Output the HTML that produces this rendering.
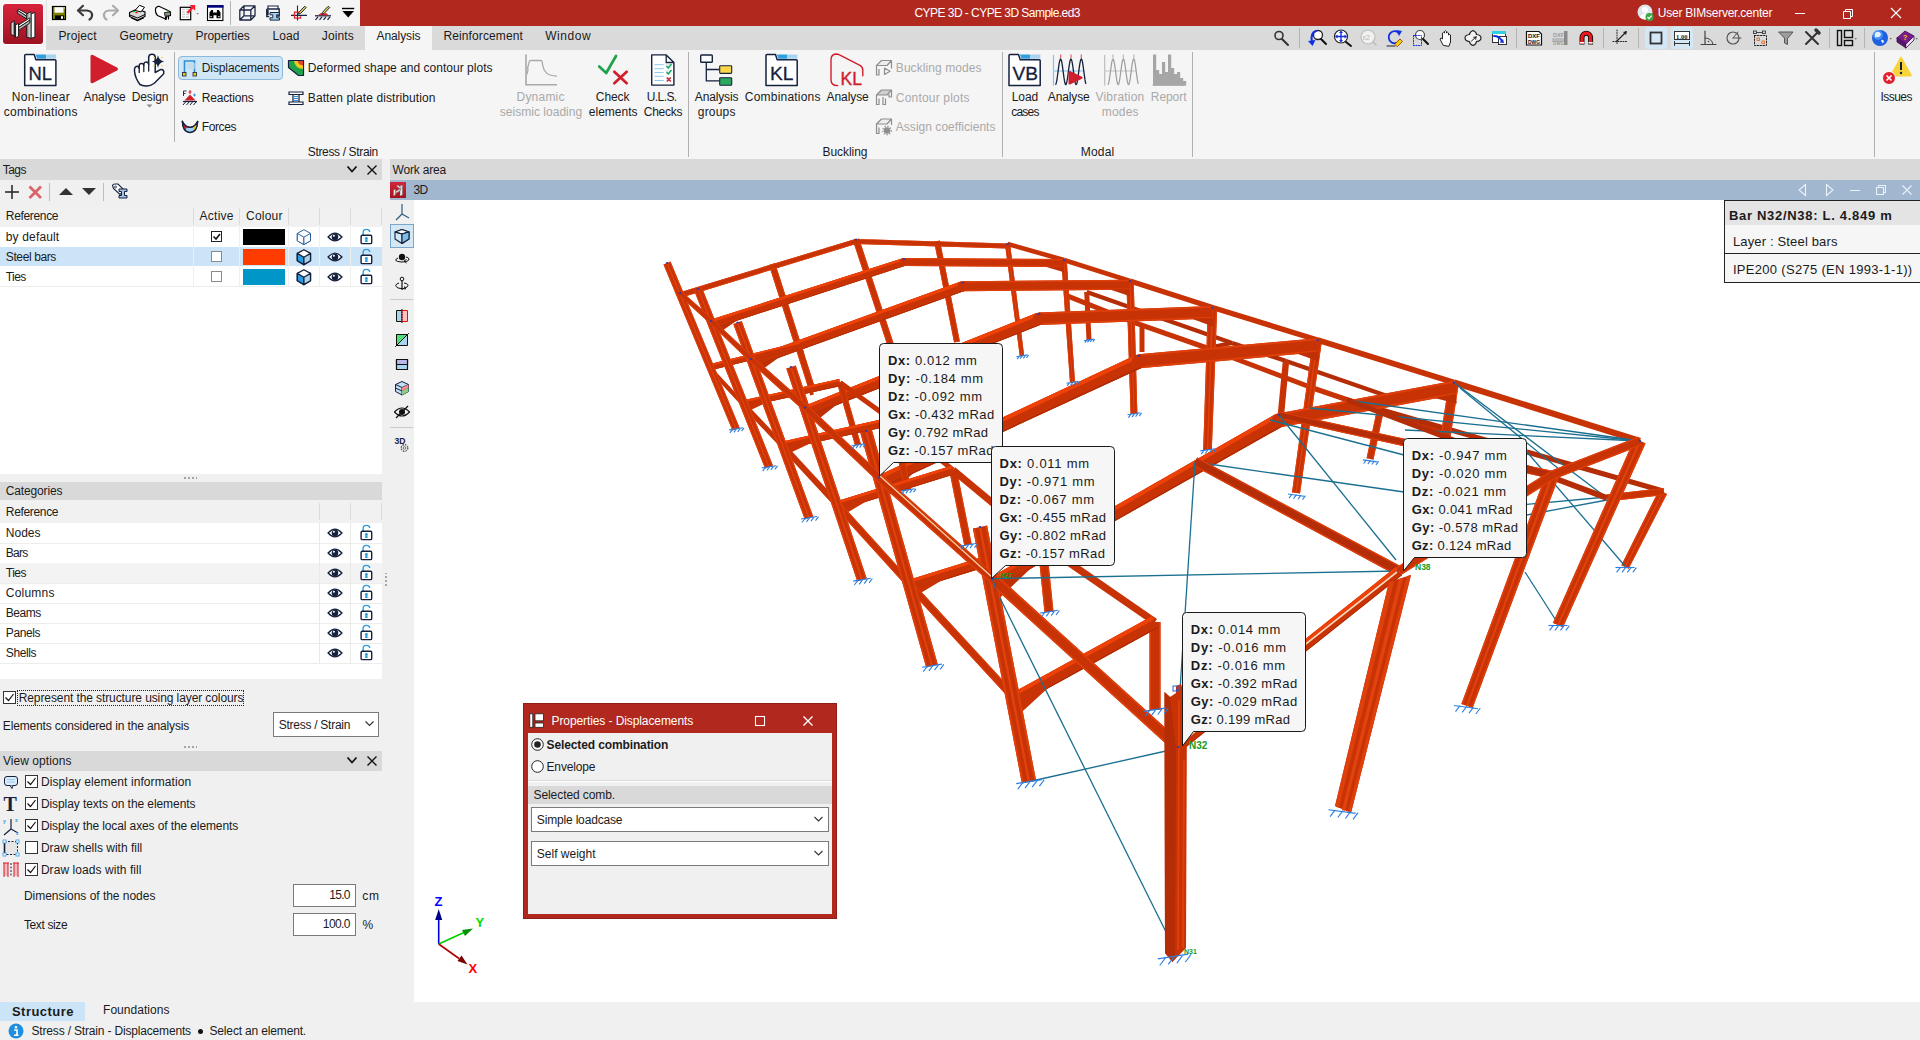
<!DOCTYPE html>
<html><head><meta charset="utf-8"><title>CYPE 3D</title>
<style>
*{box-sizing:border-box;margin:0;padding:0}
html,body{width:1920px;height:1040px;overflow:hidden;background:#f0f0f0;font-family:"Liberation Sans",sans-serif;font-size:12px;color:#1b1b1b}
.a{position:absolute}
.t{position:absolute;white-space:nowrap;font-size:12px;line-height:14px;color:#1b1b1b}
.c{text-align:center}
.g{color:#a9a9a9}
.b{font-weight:bold}
.w{color:#fff}
svg{position:absolute;overflow:visible}
.hdr{position:absolute;background:#d9d9d9;height:21px}
.row{position:absolute;left:0;width:382px;height:20px;background:#fff;border-bottom:1px solid #ececec}
.vs{position:absolute;width:1px;background:#b0b0b0}
.cb{position:absolute;width:11px;height:11px;border:1px solid #333;background:#fff}
.sel{position:absolute;background:#fff;border:1px solid #7a7a7a}
.tip{position:absolute;background:#f6f6f6;border:1px solid #222;border-radius:4px}
.tip div{position:absolute;left:8px;white-space:nowrap;font-size:13px;line-height:15px;color:#1b1b1b}
</style></head><body>
<!-- TITLE BAR -->
<div class="a" style="left:0;top:0;width:1920px;height:26px;background:#b0281e"></div>
<div class="a" style="left:0;top:0;width:360px;height:26px;background:#f5f5f5"></div>
<div class="a" style="left:0;top:26px;width:1920px;height:24px;background:#dadada"></div>
<div class="a" style="left:0;top:26px;width:46px;height:24px;background:#f5f5f5"></div>
<div class="a" style="left:0;top:50px;width:1920px;height:109px;background:#f5f5f5"></div>
<div class="a" style="left:365px;top:26px;width:67px;height:25px;background:#f5f5f5"></div>
<!-- app icon -->
<div class="a" style="left:2px;top:3px;width:42px;height:42px;border-radius:4px;background:#fbfbfb"></div>
<div class="a" style="left:3px;top:4px;width:40px;height:40px;border-radius:3px;background:linear-gradient(#d6223b,#c01c30 45%,#9b1220)"></div>
<svg style="left:3px;top:4px" width="40" height="40" viewBox="0 0 40 40">
 <defs><linearGradient id="ag" x1="0" x2="1"><stop offset="0" stop-color="#8f8f8f"/><stop offset="1" stop-color="#f2f2f2"/></linearGradient></defs>
 <g stroke="#141414" stroke-width="0.9" stroke-linejoin="round">
 <path d="M14.300 6.300 L15.800 5.200 L25.200 10.600 L23.900 12.300 Z" fill="#fff"/>
 <path d="M14.300 6.300 L23.900 12.300 L23.900 15 L14.300 9.200 Z" fill="#b4b4b4"/>
 <path d="M23.700 10 L27.400 7.800 L28.200 10 L28.200 34.300 L23.700 33.300 Z" fill="url(#ag)"/>
 <path d="M28.200 10 L31.900 8.300 L31.900 33 L28.200 34.300 Z" fill="#fff"/>
 <path d="M15.700 21 L26.800 13.800 L26.800 16.200 L15.700 23.600 Z" fill="#fff"/>
 <path d="M15.700 23.600 L26.800 16.200 L26.800 19 L15.700 26.400 Z" fill="#b9b9b9"/>
 <path d="M8 19 L11.300 16.800 L11.300 32 L8 30.300 Z" fill="#d4d4d4"/>
 <path d="M11.300 18.800 L12.600 20.500 L12.600 33.600 L11.300 32 Z" fill="#5a5a5a"/>
 <path d="M12.600 21 L15.500 19.300 L15.500 32.200 L12.600 33.800 Z" fill="#fff"/>
 </g>
</svg>
<!-- QAT icons -->
<div class="a" style="left:46px;top:0;width:1px;height:26px;background:#e2e2e2"></div>
<svg style="left:46px;top:0" width="320" height="26" viewBox="46 0 320 26">
 <!-- save -->
 <rect x="52.500" y="6.500" width="13" height="13" fill="#808000" stroke="#000" stroke-width="1.200"/><rect x="54.500" y="7.200" width="9" height="5.500" fill="#fff"/><rect x="55" y="15.400" width="9" height="4" fill="#000"/><rect x="61" y="16.200" width="2" height="2.600" fill="#fff"/><rect x="64" y="7.500" width="1" height="1" fill="#fff"/>
 <!-- undo -->
 <path d="M78.500 10.500 H87 Q92.500 11 92 16 Q91.500 18.500 89.500 19.500" fill="none" stroke="#3a3a3a" stroke-width="2.200" stroke-linecap="round"/><path d="M83 5.800 L78 10.500 L83 15.200" fill="none" stroke="#3a3a3a" stroke-width="2.200" stroke-linecap="round" stroke-linejoin="round"/>
 <!-- redo -->
 <path d="M117.500 10.500 H109 Q103.500 11 104 16 Q104.500 18.500 106.500 19.500" fill="none" stroke="#ababab" stroke-width="2.200" stroke-linecap="round"/><path d="M113 5.800 L118 10.500 L113 15.200" fill="none" stroke="#ababab" stroke-width="2.200" stroke-linecap="round" stroke-linejoin="round"/>
 <!-- printer -->
 <path d="M129.500 12.500 L137 9 L145 12 L145 16.500 L137.500 20.300 L129.500 16.500 Z" fill="#d9d9d9" stroke="#000" stroke-width="1.100"/><path d="M135 10.500 L139.500 5.300 L144.500 7.300 L141 11.800 Z" fill="#fff" stroke="#000" stroke-width="1"/><path d="M129.500 14.800 L137.500 18 L145 14.500" fill="none" stroke="#000" stroke-width="1"/><rect x="133" y="11" width="2" height="1.200" fill="#0c0"/><rect x="135.500" y="12" width="2" height="1.200" fill="#e00"/><path d="M131 17.800 L137.500 20.800 L144 17.800" fill="none" stroke="#000" stroke-width="1"/>
 <!-- plotter -->
 <path d="M155.500 9 Q156 6.500 159 6.300 L168 10.500 L170.500 12 L170.500 15.500 L167 16 L166 19.500 L163.500 18 L157.500 15.500 Q155 13 155.500 9Z" fill="#fff" stroke="#000" stroke-width="1.100"/><path d="M164.500 12.500 L170.500 12 L170.500 15.500 L165 16.300Z" fill="#8e8e8e" stroke="#000" stroke-width=".8"/><rect x="167" y="10.600" width="1.800" height="1" fill="#0c0"/><path d="M165.500 16.500 v3 M168.500 16 v3.500" stroke="#000" stroke-width="1.100"/>
 <!-- export -->
 <rect x="180.300" y="7.300" width="10.400" height="12.400" fill="#fff" stroke="#000" stroke-width="1.200"/><path d="M182 9.500h7M182 12h7M182 14.500h7M182 17h7" stroke="#d0d0d0" stroke-width="1.600"/><path d="M185.500 9 v9" stroke="#fff" stroke-width="1"/><path d="M187.500 13 L193 7" stroke="#ff1a2e" stroke-width="2.400"/><path d="M189.500 5 L195.200 5 L195.200 10.800 Z" fill="#ff1a2e"/>
 <path d="M196.200 13 h2.800 l-1.400 1.800z" fill="#8a8a8a"/>
 <!-- binoculars -->
 <rect x="207.500" y="5.700" width="15.400" height="14.800" fill="#fff" stroke="#000" stroke-width="1.100"/><rect x="207" y="5.200" width="16.400" height="2.500" fill="#000080"/><path d="M209.500 18.300 v-5.800 l1.800 -2.600 h1.800 v2.600 h3.800 v-2.600 h1.800 l1.800 2.600 v5.800 h-4 v-3 h-3 v3z" fill="#000"/><rect x="210.500" y="16" width="1.200" height="1.200" fill="#fff"/><rect x="218.300" y="16" width="1.200" height="1.200" fill="#fff"/>
 <!-- sep -->
 <rect x="230" y="1" width="1" height="24" fill="#b4b4b4"/>
 <!-- 3d box -->
 <path d="M239.800 10 h11 v10 h-11z M244 5.800 h11 v10 h-11z M239.800 10 l4.200 -4.200 M250.800 10 l4.200 -4.200 M239.800 20 l4.200 -4.200 M250.800 20 l4.200 -4.200" fill="none" stroke="#1b2742" stroke-width="1.300" stroke-linejoin="round"/>
 <!-- section print -->
 <path d="M268 9 v-3 h10 v3" fill="#fff" stroke="#1b2742" stroke-width="1.200"/><path d="M266.800 9 h12.400 v7 h-3 M266.800 9 v7.500 h2.500" fill="none" stroke="#1b2742" stroke-width="1.400"/><rect x="266.500" y="10" width="2.200" height="5" fill="#1b2742"/><path d="M270 12.500 h9.500 v2.300 h-2.800 v3 h2.800 v2.300 h-9.500 v-2.300 h2.800 v-3 h-2.800z" fill="#a6d3ee" stroke="#1b2742" stroke-width="1"/>
 <!-- node edit -->
 <path d="M291 15.400 h16 M297.500 5.500 v15" stroke="#1b2742" stroke-width="1.100"/><path d="M300.500 12.200 h-6 v6 h6 v-2" fill="none" stroke="#e0212f" stroke-width="1.300"/><path d="M299 12.300 l5.200 -5.600 q1.400 -.6 2 .8 l-5.400 5.800 l-2.300 .9z" fill="#f2d33a" stroke="#1b2742" stroke-width="1"/>
 <!-- ground edit -->
 <path d="M315 15.800 h16" stroke="#1b2742" stroke-width="1.300"/><path d="M315.500 19.800 l2.500 -3 M319.500 19.800 l2.500 -3 M323.500 19.800 l2.500 -3 M327.500 19.800 l2.500 -3" stroke="#1b2742" stroke-width="1.300"/><path d="M318 15.200 l2.500 -2 h6 l2 2z" fill="#e0212f"/><path d="M322.500 12.300 l5.200 -5.600 q1.400 -.6 2 .8 l-5.400 5.800 l-2.300 .9z" fill="#f2d33a" stroke="#1b2742" stroke-width="1"/>
 <path d="M342.400 11 h11.600 l-5.800 6.500z" fill="#000"/><rect x="342" y="7.800" width="12.200" height="1.400" fill="#000"/>
</svg>
<!-- title text -->
<svg style="left:1637px;top:4px" width="18" height="18" viewBox="0 0 18 18"><circle cx="8" cy="8" r="7.5" fill="#dfe6ee"/><circle cx="8" cy="6" r="3" fill="#fff"/><path d="M2.5 13 q5.5 -7 11 0 q-5.5 5 -11 0z" fill="#fff"/><circle cx="12.5" cy="13" r="4" fill="#3aa845"/><path d="M10.5 13 l1.5 1.6 l2.6 -3" stroke="#fff" stroke-width="1.2" fill="none"/></svg>
<svg style="left:1790px;top:0" width="130" height="26" viewBox="1790 0 130 26"><path d="M1795 13.5 h10" stroke="#fff" stroke-width="1"/><path d="M1843.5 11.500 h7 v7 h-7z M1845.500 11.500 v-2 h7 v7 h-2" fill="none" stroke="#fff" stroke-width="1"/><path d="M1891 8 l10 10 M1901 8 l-10 10" stroke="#fff" stroke-width="1.3"/></svg>
<!-- MENU TABS -->
<!-- right toolbar in menu row -->
<svg style="left:1260px;top:26px" width="660" height="24" viewBox="1260 26 660 24">
 <g fill="none" stroke-linecap="round">
 <!-- magnifier -->
 <circle cx="1279" cy="35.500" r="4" stroke="#333" stroke-width="1.6"/><path d="M1282 39 l6 6" stroke="#333" stroke-width="2"/>
 <rect x="1299" y="28" width="1" height="20" fill="#b5b5b5" stroke="none"/>
 <!-- zoom prev -->
 <circle cx="1318" cy="35" r="4.500" stroke="#222" stroke-width="1.3" fill="#fff"/><path d="M1321 39 l5 5" stroke="#111" stroke-width="2"/><path d="M1316 31 q-6 2 -4 11" stroke="#1030e0" stroke-width="2"/><path d="M1308 41 l4.500 5 l3 -6z" fill="#1030e0" stroke="none"/>
 <!-- zoom all -->
 <circle cx="1341" cy="36.500" r="6.500" stroke="#222" stroke-width="1.2" fill="#fff"/><path d="M1346 42 l5 4" stroke="#111" stroke-width="2"/><path d="M1341 32 v9 M1336.500 36.500 h9" stroke="#1030e0" stroke-width="1.4"/><path d="M1341 30.500 l-2 2.500 h4z M1341 42.500 l-2 -2.500 h4z M1335 36.500 l2.500 -2 v4z M1347 36.500 l-2.500 -2 v4z" fill="#1030e0" stroke="none"/>
 <!-- x2 -->
 <circle cx="1368" cy="37" r="7" stroke="#bdbdbd" stroke-width="1.2" fill="#f1f1f1"/><path d="M1373 42 l3 3" stroke="#bdbdbd" stroke-width="1.600"/><text x="1362.500" y="40" font-size="7" fill="#b5b5b5" stroke="none" font-family="Liberation Sans">x2</text>
 <!-- redraw -->
 <path d="M1399 33 a6 6 0 1 0 1 7" stroke="#1030e0" stroke-width="1.8"/><path d="M1396 30 l6 1 l-3 5z" fill="#1030e0" stroke="none"/><path d="M1387 46 h8" stroke="#222" stroke-width="1"/><path d="M1395 44 l5 -5 l2.500 2.500 l-5 5z" fill="#f0d000" stroke="#a03000" stroke-width=".8"/>
 <!-- zoom window -->
 <circle cx="1420" cy="35" r="4.500" stroke="#444" stroke-width="1.200" fill="#fff"/><path d="M1423 39 l5 5" stroke="#111" stroke-width="2"/><path d="M1413.500 35.500 h8 v10 h-8z" stroke="#1030e0" stroke-width="1" stroke-dasharray="1 1.500"/>
 <!-- hand -->
 <path d="M1443 45 l-3 -6 q1 -2 2.500 0 v-6 q1 -1.500 2 0 v-1.500 q1 -1.500 2 0 v1.500 q1 -1.500 2 0 v2 q1 -1 2 0 v7 l-1.500 4z" fill="#fff" stroke="#222" stroke-width="1"/>
 <!-- orbit -->
 <path d="M1473 30.500 q3.500 1.500 3.500 4 q4.500 .500 4.500 3.500 q0 3 -4.500 3.500 q0 2.500 -3.500 4 q-3.500 -1.500 -3.500 -4 q-4.500 -.500 -4.500 -3.500 q0 -3 4.500 -3.500 q0 -2.500 3.500 -4z" stroke="#222" stroke-width="1.200" fill="#f4f4f4"/><path d="M1471.500 41 l4.500 -4 M1476 37 l-.3 2.300 M1476 37 l-2.300 .3" stroke="#222" stroke-width="1"/>
 <!-- window zoom -->
 <rect x="1492.500" y="31.500" width="13" height="11" fill="#fff" stroke="#333"/><rect x="1492" y="31" width="14" height="3" fill="#30d0e0" stroke="none"/><rect x="1498.500" y="36.500" width="8" height="8" fill="#fff" stroke="#333"/><path d="M1494 36 q5 0 8 5" stroke="#1030e0" stroke-width="1.800"/><path d="M1504 43 l-4.500 -.5 l3.500 -3.500z" fill="#1030e0" stroke="none"/>
 <rect x="1516" y="28" width="1" height="20" fill="#b5b5b5" stroke="none"/>
 <!-- DXF -->
 <path d="M1526.500 31.500 h12.500 l2.500 2.500 v11 h-15z" fill="#fff" stroke="#111" stroke-width="1.200"/><text x="1528" y="38" font-size="6.200" font-weight="bold" fill="#111" stroke="none" font-family="Liberation Sans" textLength="12" lengthAdjust="spacingAndGlyphs">DXF</text><text x="1528" y="44" font-size="6.200" font-weight="bold" fill="#111" stroke="none" font-family="Liberation Sans" textLength="12" lengthAdjust="spacingAndGlyphs">DWG</text>
 <text x="1553" y="37" font-size="6.200" font-weight="bold" fill="#9a9a9a" stroke="none" font-family="Liberation Sans" textLength="11" lengthAdjust="spacingAndGlyphs">DXF</text><text x="1553" y="45" font-size="6.200" font-weight="bold" fill="#9a9a9a" stroke="none" font-family="Liberation Sans" textLength="11" lengthAdjust="spacingAndGlyphs">DWG</text><path d="M1552.500 39 h13 M1552.500 41 h13" stroke="#9a9a9a" stroke-width="1"/><rect x="1564" y="31" width="3.500" height="14" fill="#8a8a8a" stroke="none"/>
 <!-- magnet -->
 <path d="M1582 44.500 v-7 a4.300 4.300 0 0 1 8.600 0 v7" stroke="#111" stroke-width="5" stroke-linecap="butt"/><path d="M1582 44 v-6.500 a4.300 4.300 0 0 1 8.600 0 v6.500" stroke="#f01818" stroke-width="3.200" stroke-linecap="butt"/><path d="M1580.400 42.800 h3.200 M1589 42.800 h3.200" stroke="#fff" stroke-width="1.600"/>
 <rect x="1603" y="28" width="1" height="20" fill="#b5b5b5" stroke="none"/>
 <!-- snap -->
 <path d="M1617 30 v14 M1613 41.500 h15" stroke="#222" stroke-width="1" stroke-dasharray="1 1.500"/><path d="M1617 41 l9 -9" stroke="#222" stroke-width="1.200"/><path d="M1627 31 l-4 1 l3 3z" fill="#222" stroke="none"/>
 <rect x="1638" y="28" width="1" height="20" fill="#b5b5b5" stroke="none"/>
 <rect x="1645" y="27" width="22" height="22" rx="3" fill="#d4e7f4" stroke="none"/>
 <rect x="1671" y="27" width="22" height="22" rx="3" fill="#d4e7f4" stroke="none"/>
 <rect x="1650.500" y="32.500" width="11" height="11" stroke="#333" stroke-width="1.800"/>
 <rect x="1674.500" y="31.500" width="15" height="8" fill="#fff" stroke="#333" stroke-width="1"/><text x="1676" y="38.500" font-size="6.500" font-weight="bold" fill="#222" stroke="none" font-family="Liberation Serif">1.00</text><path d="M1674.500 43.500 h15 M1674.500 41.500 v4 M1689.500 41.500 v4" stroke="#333"/>
 <!-- angle -->
 <path d="M1705 31 v13 M1701 44.500 h15" stroke="#444" stroke-width="1.200"/><path d="M1705 38 q7 0 8 6.500" stroke="#444" stroke-width="1"/><circle cx="1708.500" cy="41.500" r=".8" fill="#444"/>
 <!-- circle -->
 <circle cx="1733" cy="38" r="6" stroke="#555" stroke-width="1.200"/><path d="M1733 38 h8 M1733 38 l5 -6" stroke="#555" stroke-width="1"/>
 <!-- dotted sel -->
 <rect x="1754.500" y="35.500" width="12" height="10" stroke="#222" stroke-dasharray="1.500 1.500"/><rect x="1753.500" y="31" width="3" height="2.500" stroke="#222" stroke-width=".8"/><rect x="1762.500" y="31" width="3" height="2.500" stroke="#222" stroke-width=".8"/><path d="M1757 32.500 h5" stroke="#222" stroke-width=".8"/><rect x="1757" y="38" width="2.500" height="2.500" stroke="#e07030" stroke-width=".9"/><rect x="1762" y="41" width="2.500" height="2.500" stroke="#e07030" stroke-width=".9"/>
 <!-- funnel -->
 <path d="M1779 32 h14 l-5.500 6.500 v6 l-3 -1.500 v-4.500z" fill="#9c9c9c" stroke="#555" stroke-width="1"/>
 <!-- tools -->
 <path d="M1806 32 l12 12 M1818 32 l-12 12" stroke="#333" stroke-width="2"/><path d="M1816 30 l3 3" stroke="#333" stroke-width="3.500"/>
 <rect x="1829" y="28" width="1" height="20" fill="#b5b5b5" stroke="none"/>
 <!-- layout -->
 <rect x="1837.500" y="30.500" width="4" height="15" stroke="#111" stroke-width="1.400"/><rect x="1844.500" y="30.500" width="8" height="7" stroke="#111" stroke-width="1.400"/><rect x="1844.500" y="40.500" width="8" height="5" stroke="#111" stroke-width="1.400"/><path d="M1854.500 38 l2.500 0 l-1.250 1.800z" fill="#777" stroke="none"/>
 <rect x="1864" y="28" width="1" height="20" fill="#b5b5b5" stroke="none"/>
 <!-- globe -->
 <circle cx="1880" cy="38" r="8" fill="#1c60e0" stroke="none"/><circle cx="1878" cy="35" r="5" fill="#5aa0ff" stroke="none" opacity=".7"/><path d="M1875 33 q4 -3 6 1 q-1 4 -4 3 q-3 2 -2 -4z M1881 40 q3 -1 3 2 q-2 3 -3 -2z" fill="#dff0ff" stroke="none"/><path d="M1889.500 38 l2.500 0 l-1.250 1.800z" fill="#777" stroke="none"/>
 <!-- book -->
 <path d="M1897 38 l8 -7 l9 5 l-8 8z" fill="#7a1d8c" stroke="#3a0d4c" stroke-width=".8"/><path d="M1897 38 v4 l9 6 v-4z" fill="#5a136c" stroke="#3a0d4c" stroke-width=".8"/><path d="M1906 44 l8 -8 v4 l-8 8z" fill="#eadff0" stroke="#3a0d4c" stroke-width=".8"/><text x="1903" y="40" font-size="7" font-weight="bold" fill="#ffd400" stroke="none" font-family="Liberation Sans">?</text><path d="M1915.500 38 l2.500 0 l-1.250 1.800z" fill="#777" stroke="none"/>
 </g>
</svg>
<!-- RIBBON -->
<div class="vs" style="left:174px;top:52px;height:90px"></div>
<div class="vs" style="left:688px;top:52px;height:105px"></div>
<div class="vs" style="left:1002px;top:52px;height:105px"></div>
<div class="vs" style="left:1192px;top:52px;height:105px"></div>
<div class="vs" style="left:1874px;top:52px;height:105px"></div>
<!-- big buttons text -->
<svg style="left:146px;top:104px" width="8" height="5"><path d="M0.500 0.500 h6 l-3 3z" fill="#888"/></svg>
<!-- group labels -->
<!-- small buttons -->
<div class="a" style="left:178px;top:56px;width:105px;height:24px;background:#cfe6f6;border:1px solid #8db8d8;border-radius:4px"></div>
<!-- RIBBON ICONS -->
<svg style="left:0;top:50px" width="1920" height="109" viewBox="0 50 1920 109">
 <g fill="none">
 <!-- NL folder -->
 <path d="M24.7 55.500 q0 -1 1 -1 h8.500 l1.700 5.200 h19 q1 0 1 1 v24.800 h-31.200z" fill="#fff" stroke="#16213d" stroke-width="1.500" stroke-linejoin="round"/><path d="M35.7 54.400 h9.600 q.8 0 .8 .8 v3.600 h-9z" fill="#2f9fe0"/><path d="M46.3 54.400 h9 q.8 0 .8 .8 v3.600 h-9.800z" fill="#a9d4f0"/>
 <text x="28.500" y="79.500" font-size="18.500" fill="#16213d" stroke="#16213d" stroke-width=".3" font-family="Liberation Sans" textLength="23.500" lengthAdjust="spacingAndGlyphs">NL</text>
 <!-- play -->
 <path d="M90.500 56.500 q0 -2.500 2.500 -1.500 l24 12.500 q2 1.500 0 3 l-24 12.500 q-2.500 1 -2.500 -1.500z" fill="#d01e2d"/>
 <!-- hand design -->
 <path d="M140 84.500 Q135 78 134.500 71 Q134.300 66.500 137 66.300 Q139 66.300 139.200 68.500 L139.200 65.500 Q139.500 63.500 141.500 63.500 Q143.700 63.500 143.800 65.500 L143.800 64 Q144.200 62 146.200 62 Q148.500 62 148.700 64.500 L148.700 57 Q149 54.300 152 54.300 Q155 54.300 155.200 57 L155.200 72.500 L160 69.800 Q163 68.800 163.800 71.500 Q164.200 73.500 162.500 75 L154 83.500 Q150 86.300 146 86 Q142 85.800 140 84.500 Z" fill="#fff" stroke="#16213d" stroke-width="1.500" stroke-linejoin="round"/>
 <path d="M139.200 68.500 v4 M143.800 65.500 v6 M148.700 64.500 v6.500" stroke="#16213d" stroke-width="1.300" stroke-linecap="round"/>
 <path d="M158 55.300 q1 5.200 6.200 6.200 q-5.200 1 -6.200 6.200 q-1 -5.200 -6.200 -6.200 q5.200 -1 6.200 -6.200z" fill="#16213d"/><path d="M153.300 56.800 l1.300 1.300 M162.700 56.800 l-1.300 1.300 M153.300 66.200 l1.300 -1.300 M162.700 66.200 l-1.300 -1.300" stroke="#f2d33a" stroke-width="1.100"/>
 <!-- displacements icon -->
 <path d="M184.500 73 v-12 h10 v12" stroke="#2d8fd6" stroke-width="1.600"/><path d="M186 63 h11 l-2 6 h-8z" fill="#bcd7ea" opacity=".7"/><rect x="182.500" y="72.500" width="3.500" height="3.500" fill="#f5c518" stroke="#16213d" stroke-width=".8"/><rect x="193" y="72.500" width="3.500" height="3.500" fill="#f5c518" stroke="#16213d" stroke-width=".8"/>
 <!-- reactions -->
 <path d="M183 101.500 h14" stroke="#16213d" stroke-width="1.200"/><path d="M183 105 l2.500 -3 M186.500 105 l2.500 -3 M190 105 l2.500 -3 M193.500 105 l2.500 -3" stroke="#16213d" stroke-width="1"/><path d="M184.500 100.500 l5.500 -6 l5.500 6z" fill="#d01e2d"/><path d="M190 90 v4 M188.500 92 h3" stroke="#d01e2d" stroke-width="1"/><path d="M193 95 h3 M194.500 93.500 v3" stroke="#2d8fd6" stroke-width=".9"/><path d="M183.500 96 v-5 h3 M183.500 93.500 h2" stroke="#16213d" stroke-width=".9"/>
 <!-- forces -->
 <path d="M182.300 121.300 Q182.800 132.600 190 132.600 Q197.200 132.600 197.700 121.300 Q195 127.300 190 127.300 Q185 127.300 182.300 121.300 Z" fill="#9ed0f0" stroke="#16213d" stroke-width="1.300" stroke-linejoin="round"/>
 <path d="M182.600 122.500 Q183 127.500 185.300 130.300 L187.200 126.800 Q184.500 125.800 182.600 122.500z" fill="#d01e2d"/>
 <path d="M197.400 122.500 Q197 127.500 194.700 130.300 L192.800 126.800 Q195.500 125.800 197.400 122.500z" fill="#f5c518"/>
 <path d="M182.300 121.300 Q182.800 132.600 190 132.600 Q197.200 132.600 197.700 121.300 Q195 127.300 190 127.300 Q185 127.300 182.300 121.300 Z" fill="none" stroke="#16213d" stroke-width="1.300" stroke-linejoin="round"/>
 <!-- deformed contour -->
 <path d="M288.500 60.500 h15 v15 h-5 l-10 -8z" fill="#1ea24a" stroke="#16213d" stroke-width="1.200" stroke-linejoin="round"/><path d="M303 61 h-9 q1 7 9 8z" fill="#f2c81e"/><path d="M303 61 h-5.500 q1 4 5.500 4.500z" fill="#e0452a"/>
 <!-- batten -->
 <path d="M289 92 h14 v2.500 h-14z M289 102 h14 v2.500 h-14z" fill="#fff" stroke="#16213d" stroke-width="1.200"/><path d="M293 94.500 v7.500 M299 94.500 v7.500" stroke="#16213d" stroke-width="1.200"/><path d="M294 96.500 h4 M294 98.500 h4 M294 100.500 h4" stroke="#2d8fd6" stroke-width="1"/>
 <!-- dynamic seismic (gray) -->
 <path d="M526 54.400 V84.800 H557" stroke="#a9a9a9" stroke-width="1.600"/><path d="M527 74.400 L528 70 L527.600 68 L529.400 61.200 Q530 60.400 531.500 60.500 H541 Q542 60.500 542.200 62 Q543 68 544.500 70.500 Q546.500 74 550 75 Q553 76 557 76.200" stroke="#a9a9a9" stroke-width="1.300"/>
 <!-- check elements -->
 <path d="M599.200 66.500 l7 6.500 l9.800 -17" stroke="#1ea24a" stroke-width="2.700" stroke-linecap="round" stroke-linejoin="round"/><path d="M614.300 71.800 l12.400 11.400 M626.700 71.800 l-12.400 11.400" stroke="#d01e2d" stroke-width="2.700" stroke-linecap="round"/>
 <!-- ULS checks doc -->
 <path d="M651.700 54.900 h14.500 l7.700 7.600 v22.600 h-22.200z" fill="#fff" stroke="#16213d" stroke-width="1.400" stroke-linejoin="round"/><path d="M666.200 54.900 v7.600 h7.700" stroke="#16213d" stroke-width="1.300"/><path d="M654.400 64.700 h9.300 M654.400 68.700 h9.300 M654.400 72.500 h9.300 M654.400 76.300 h9.300 M654.400 80.500 h9.300" stroke="#8ccaf0" stroke-width="1"/><rect x="666" y="64" width="5.500" height="4.500" fill="#d8ecfa"/><rect x="666" y="70" width="5.500" height="4.500" fill="#d8ecfa"/><rect x="666" y="77" width="5.500" height="4.500" fill="#d8ecfa"/><path d="M666.500 66 l1.800 2 l3.200 -4 M666.500 72 l1.800 2 l3.200 -4" stroke="#1ea24a" stroke-width="1.300"/><path d="M666.800 77.500 l4 4 M670.800 77.500 l-4 4" stroke="#d01e2d" stroke-width="1.300"/>
 <!-- analysis groups -->
 <rect x="700.700" y="55" width="11.600" height="7.200" rx=".8" fill="#fff" stroke="#16213d" stroke-width="1.400"/><path d="M706.300 62.200 V80.800 H719.400 M706.300 69.500 H719.400" stroke="#16213d" stroke-width="1.300"/><rect x="719.700" y="65.800" width="12" height="7.600" rx=".8" fill="#fbd84a" stroke="#16213d" stroke-width="1.100"/><rect x="719.700" y="77.700" width="12" height="7.600" rx=".8" fill="#2da860" stroke="#16213d" stroke-width="1.100"/>
 <!-- KL folder -->
 <path d="M766.0 55.500 q0 -1 1 -1 h8.500 l1.700 5.200 h19 q1 0 1 1 v24.800 h-31.200z" fill="#fff" stroke="#16213d" stroke-width="1.500" stroke-linejoin="round"/><path d="M777.0 54.400 h9.600 q.8 0 .8 .8 v3.600 h-9z" fill="#2f9fe0"/><path d="M787.6 54.400 h9 q.8 0 .8 .8 v3.600 h-9.800z" fill="#a9d4f0"/>
 <text x="770" y="79.500" font-size="18.500" fill="#16213d" stroke="#16213d" stroke-width=".3" font-family="Liberation Sans" textLength="23.500" lengthAdjust="spacingAndGlyphs">KL</text>
 <!-- KL analyse -->
 <path d="M837.800 85.600 Q831 85.600 831 79.700 V59.900 Q831 54.200 836 54 Q838 54 839.500 54.800 L860 65.300 Q862.800 66.800 862.800 70 V75.800" stroke="#d01e2d" stroke-width="1.400" stroke-linecap="round"/><text x="840.500" y="84.600" font-size="17.500" fill="#d01e2d" stroke="#d01e2d" stroke-width=".4" font-family="Liberation Sans" textLength="21.500" lengthAdjust="spacingAndGlyphs">KL</text>
 <!-- buckling small icons gray -->
 <g stroke="#8e8e8e" stroke-width="1.200" fill="#ededed" stroke-linejoin="round"><path d="M876.500 65.500 l5 -5 h10 l-4.500 5z M876.500 65.500 v9.500 h2.500 v-6 M891.500 60.500 v8"/><path d="M884.500 68 l5.500 3.200 l-5.500 3.200z" fill="#f5f5f5"/>
 <path d="M876.500 95 l5 -5 h10 l-4.500 5z" fill="#cfcfcf"/><path d="M876.500 95 v9.500 h2.500 v-6 M883 97 v7.500 h2.500 v-6 M891.500 90 v7 h-2.500 v-3" fill="none"/>
 <path d="M876.500 124 l5 -5 h10 l-4.500 5z M876.500 124 v9.500 h2.500 v-6 M891.500 119 v6"/><circle cx="887" cy="130.500" r="2.600" fill="#8e8e8e"/><circle cx="887" cy="130.500" r="4.200" fill="none" stroke-dasharray="1.400 1.400"/></g>
 <!-- VB folder -->
 <path d="M1009.0 55.500 q0 -1 1 -1 h8.500 l1.700 5.200 h19 q1 0 1 1 v24.800 h-31.200z" fill="#fff" stroke="#16213d" stroke-width="1.500" stroke-linejoin="round"/><path d="M1020.0 54.400 h9.600 q.8 0 .8 .8 v3.600 h-9z" fill="#2f9fe0"/><path d="M1030.6 54.400 h9 q.8 0 .8 .8 v3.600 h-9.800z" fill="#a9d4f0"/>
 <text x="1012.500" y="79.500" font-size="18.500" fill="#16213d" stroke="#16213d" stroke-width=".3" font-family="Liberation Sans" textLength="25.500" lengthAdjust="spacingAndGlyphs">VB</text>
 <!-- modal analyse -->
 <path d="M1053.500 55 v30.600" stroke="#7fc4ee" stroke-width="1.200"/><path d="M1053 71 h31" stroke="#9fd2f2" stroke-width="1.400"/><polyline points="1055.4,84.6 1055.9,84.1 1056.4,82.4 1056.9,79.8 1057.4,76.5 1057.9,72.7 1058.4,68.8 1058.9,65.2 1059.4,62.2 1059.9,60.1 1060.4,59.1 1060.9,59.2 1061.4,60.5 1061.9,62.8 1062.4,65.9 1062.9,69.6 1063.4,73.4 1063.9,77.2 1064.4,80.4 1064.9,82.8 1065.4,84.3 1065.9,84.6 1066.4,83.7 1066.9,81.7 1067.4,78.9 1067.9,75.3 1068.4,71.5 1068.9,67.7 1069.4,64.3 1069.9,61.5 1070.4,59.7 1070.9,59.0 1071.4,59.5 1071.9,61.1 1072.4,63.6 1072.9,67.0 1073.4,70.7 1073.9,74.6 1074.4,78.2 1074.9,81.2 1075.4,83.4 1075.9,84.5 1076.4,84.4 1076.9,83.2 1077.4,81.0 1077.9,77.9 1078.4,74.2 1078.9,70.3 1079.4,66.6 1079.9,63.4 1080.4,60.9 1080.9,59.4 1081.4,59.0 1081.9,59.8 1082.4,61.7 1082.9,64.6 1083.4,68.1 1083.9,71.9 1084.4,75.7 1084.9,79.2 1085.4,82.0 1085.9,83.8" stroke="#16213d" stroke-width="1.300"/><path d="M1060.600 54.400 v3.600 M1071 54.400 v3.600 M1081.300 54.400 v3.600" stroke="#e8687a" stroke-width="1.300"/><path d="M1068.500 72.500 q0 -2.200 2 -1.200 l11.500 5.500 q1.600 1 0 2 l-11.500 5.500 q-2 1 -2 -1.200z" fill="#d01e2d"/>
 <!-- vibration modes gray -->
 <path d="M1104.700 55 v30.600" stroke="#bdbdbd" stroke-width="1.200"/><path d="M1104 71 h32" stroke="#c9c9c9" stroke-width="1.200"/><polyline points="1107.8,84.6 1108.3,84.1 1108.8,82.4 1109.3,79.8 1109.8,76.5 1110.3,72.7 1110.8,68.8 1111.3,65.2 1111.8,62.2 1112.3,60.1 1112.8,59.1 1113.3,59.2 1113.8,60.5 1114.3,62.8 1114.8,65.9 1115.3,69.6 1115.8,73.4 1116.3,77.2 1116.8,80.4 1117.3,82.8 1117.8,84.3 1118.3,84.6 1118.8,83.7 1119.3,81.7 1119.8,78.9 1120.3,75.3 1120.8,71.5 1121.3,67.7 1121.8,64.3 1122.3,61.5 1122.8,59.7 1123.3,59.0 1123.8,59.5 1124.3,61.1 1124.8,63.6 1125.3,67.0 1125.8,70.7 1126.3,74.6 1126.8,78.2 1127.3,81.2 1127.8,83.4 1128.3,84.5 1128.8,84.4 1129.3,83.2 1129.8,81.0 1130.3,77.9 1130.8,74.2 1131.3,70.3 1131.8,66.6 1132.3,63.4 1132.8,60.9 1133.3,59.4 1133.8,59.0 1134.3,59.8 1134.8,61.7 1135.3,64.6 1135.8,68.1 1136.3,71.9 1136.8,75.7 1137.3,79.2 1137.8,82.0 1138.3,83.8" stroke="#9c9c9c" stroke-width="1.200"/><path d="M1113 54.400 v3.600 M1123.400 54.400 v3.600 M1133.900 54.400 v3.600" stroke="#bdbdbd" stroke-width="1.300"/>
 <!-- report gray -->
 <rect x="1153" y="54.5" width="3.200" height="31.1" fill="#a6a6a6"/><rect x="1156" y="70" width="3.200" height="15.6" fill="#a6a6a6"/><rect x="1159" y="74" width="3.200" height="11.6" fill="#a6a6a6"/><rect x="1162" y="62" width="3.200" height="23.6" fill="#a6a6a6"/><rect x="1165" y="72" width="3.200" height="13.6" fill="#a6a6a6"/><rect x="1168" y="54.5" width="3.200" height="31.1" fill="#a6a6a6"/><rect x="1171" y="68" width="3.200" height="17.6" fill="#a6a6a6"/><rect x="1174" y="74" width="3.200" height="11.6" fill="#a6a6a6"/><rect x="1177" y="72" width="3.200" height="13.6" fill="#a6a6a6"/><rect x="1180" y="78" width="3.200" height="7.6" fill="#a6a6a6"/><rect x="1183" y="81" width="3.200" height="4.6" fill="#a6a6a6"/><rect x="1152.700" y="84" width="31.700" height="1.600" fill="#a6a6a6"/>
 <!-- issues -->
 <path d="M1900 57.500 q1 -2 2 0 l9.500 17 q1 2 -1.500 2 h-18 q-2.500 0 -1.500 -2z" fill="#f8d43a"/><path d="M1901 62 v8" stroke="#16213d" stroke-width="2"/><circle cx="1901" cy="73" r="1.200" fill="#16213d"/><circle cx="1889" cy="78" r="6.500" fill="#e0202c" stroke="#fff" stroke-width="1"/><path d="M1886.500 75.500 l5 5 M1891.500 75.500 l-5 5" stroke="#fff" stroke-width="1.600"/>
 </g>
</svg>
<div class="t w" id="tt" style="left:914.50px;letter-spacing:-0.546px;top:6px">CYPE 3D - CYPE 3D Sample.ed3</div>
<div class="t w" id="tu" style="left:1657.80px;letter-spacing:-0.234px;top:6px">User BIMserver.center</div>
<div class="t" id="m0" style="left:58.50px;letter-spacing:0.107px;top:29px">Project</div>
<div class="t" id="m1" style="left:119.50px;letter-spacing:0.088px;top:29px">Geometry</div>
<div class="t" id="m2" style="left:195.50px;letter-spacing:-0.045px;top:29px">Properties</div>
<div class="t" id="m3" style="left:272.50px;letter-spacing:0.099px;top:29px">Load</div>
<div class="t" id="m4" style="left:321.80px;letter-spacing:0.128px;top:29px">Joints</div>
<div class="t" id="m5" style="left:376.50px;letter-spacing:-0.098px;top:29px">Analysis</div>
<div class="t" id="m6" style="left:443.50px;letter-spacing:0.104px;top:29px">Reinforcement</div>
<div class="t" id="m7" style="left:545.20px;letter-spacing:0.582px;top:29px">Window</div>
<div class="t" id="r0" style="left:11.80px;letter-spacing:0.293px;top:90px">Non-linear</div>
<div class="t" id="r1" style="left:3.80px;letter-spacing:0.271px;top:105px">combinations</div>
<div class="t" id="r2" style="left:83.50px;letter-spacing:-0.067px;top:90px">Analyse</div>
<div class="t" id="r3" style="left:131.80px;letter-spacing:-0.132px;top:90px">Design</div>
<div class="t g" id="r4" style="left:516.50px;letter-spacing:0.219px;top:90px">Dynamic</div>
<div class="t g" id="r5" style="left:499.80px;letter-spacing:0.025px;top:105px">seismic loading</div>
<div class="t" id="r6" style="left:595.80px;letter-spacing:-0.079px;top:90px">Check</div>
<div class="t" id="r7" style="left:588.80px;letter-spacing:-0.000px;top:105px">elements</div>
<div class="t" id="r8" style="left:646.80px;letter-spacing:-0.592px;top:90px">U.L.S.</div>
<div class="t" id="r9" style="left:643.80px;letter-spacing:-0.263px;top:105px">Checks</div>
<div class="t" id="r10" style="left:694.80px;letter-spacing:-0.141px;top:90px">Analysis</div>
<div class="t" id="r11" style="left:697.80px;letter-spacing:0.199px;top:105px">groups</div>
<div class="t" id="r12" style="left:744.80px;letter-spacing:0.211px;top:90px">Combinations</div>
<div class="t" id="r13" style="left:826.50px;letter-spacing:-0.067px;top:90px">Analyse</div>
<div class="t" id="r14" style="left:1011.80px;letter-spacing:-0.101px;top:90px">Load</div>
<div class="t" id="r15" style="left:1011.20px;letter-spacing:-0.765px;top:105px">cases</div>
<div class="t" id="r16" style="left:1047.80px;letter-spacing:-0.117px;top:90px">Analyse</div>
<div class="t g" id="r17" style="left:1095.50px;letter-spacing:0.193px;top:90px">Vibration</div>
<div class="t g" id="r18" style="left:1101.80px;letter-spacing:0.167px;top:105px">modes</div>
<div class="t g" id="r19" style="left:1150.80px;letter-spacing:-0.066px;top:90px">Report</div>
<div class="t" id="r20" style="left:1880.50px;letter-spacing:-0.537px;top:90px">Issues</div>
<div class="t" id="r21" style="left:307.80px;letter-spacing:-0.354px;top:145px">Stress / Strain</div>
<div class="t" id="r22" style="left:822.50px;letter-spacing:-0.051px;top:145px">Buckling</div>
<div class="t" id="r23" style="left:1080.80px;letter-spacing:0.178px;top:145px">Modal</div>
<div class="t" id="r24" style="left:201.80px;letter-spacing:-0.109px;top:61px">Displacements</div>
<div class="t" id="r25" style="left:201.80px;letter-spacing:-0.172px;top:91px">Reactions</div>
<div class="t" id="r26" style="left:201.80px;letter-spacing:-0.398px;top:120px">Forces</div>
<div class="t" id="r27" style="left:307.80px;letter-spacing:0.019px;top:61px">Deformed shape and contour plots</div>
<div class="t" id="r28" style="left:307.80px;letter-spacing:0.095px;top:91px">Batten plate distribution</div>
<div class="t g" id="r29" style="left:895.80px;letter-spacing:0.075px;top:61px">Buckling modes</div>
<div class="t g" id="r30" style="left:895.80px;letter-spacing:0.194px;top:91px">Contour plots</div>
<div class="t g" id="r31" style="left:895.80px;letter-spacing:0.029px;top:120px">Assign coefficients</div>
<div class="hdr" style="left:0;top:159px;width:382px"></div>
<div class="t" id="p1" style="left:2.70px;letter-spacing:-0.520px;top:163px">Tags</div>
<svg style="left:340px;top:160px" width="42" height="20" viewBox="340 160 42 20"><path d="M347.500 166.500 l4.500 5 l4.500 -5" fill="none" stroke="#111" stroke-width="1.800"/><path d="M367.500 165.500 l9 9 M376.500 165.500 l-9 9" stroke="#111" stroke-width="1.400"/></svg>
<svg style="left:0;top:180px" width="140" height="25" viewBox="0 180 140 25"><path d="M5 192 h14 M12 185 v14" stroke="#222" stroke-width="1.500"/><path d="M29.500 186.500 l11.500 11.500 M41 186.500 l-11.500 11.500" stroke="#d9646a" stroke-width="2.800"/><rect x="49" y="183" width="1" height="18" fill="#bdbdbd"/><path d="M59 195 l7 -7 l7 7z" fill="#333"/><path d="M82 188 l7 7 l7 -7z" fill="#333"/><rect x="103" y="183" width="1" height="18" fill="#bdbdbd"/><path d="M112.500 185.500 q.5 -1.500 2.500 -1.500 h3 l6 6 l-4 4.500 l-6.500 -6z" fill="#fff" stroke="#16213d" stroke-width="1.100"/><circle cx="115.500" cy="187" r="1" fill="none" stroke="#16213d" stroke-width=".8"/><path d="M119 189 h8 v2.500 h-2.500 v4 h2.500 v2.500 h-8 v-2.500 h2.500 v-4 h-2.500z" fill="#9fc4e4" stroke="#16213d" stroke-width="1"/></svg>
<div class="a" style="left:0;top:206px;width:382px;height:21px;background:#f1f1f1"></div>
<div class="vs" style="left:193px;top:208px;height:17px;background:#dcdcdc"></div>
<div class="vs" style="left:239px;top:208px;height:17px;background:#dcdcdc"></div>
<div class="vs" style="left:288px;top:208px;height:17px;background:#dcdcdc"></div>
<div class="vs" style="left:319px;top:208px;height:17px;background:#dcdcdc"></div>
<div class="vs" style="left:350px;top:208px;height:17px;background:#dcdcdc"></div>
<div class="vs" style="left:381px;top:208px;height:17px;background:#dcdcdc"></div>
<div class="t" id="p2" style="left:5.80px;letter-spacing:-0.334px;top:209px">Reference</div>
<div class="t" id="p3" style="left:199.50px;letter-spacing:0.263px;top:209px">Active</div>
<div class="t" id="p4" style="left:246.00px;letter-spacing:0.228px;top:209px">Colour</div>
<div class="a" style="left:0;top:227px;width:382px;height:247px;background:#fff"></div>
<div class="t" id="tr0" style="left:5.80px;letter-spacing:0.150px;top:230px">by default</div>
<div class="cb" style="left:211px;top:231px;border-color:#222"></div>
<div class="a" style="left:243px;top:229px;width:42px;height:16px;background:#000000"></div>
<div class="a" style="left:0;top:247px;width:382px;height:19px;background:#cce4f7"></div>
<div class="t" id="tr1" style="left:5.80px;letter-spacing:-0.392px;top:250px">Steel bars</div>
<div class="cb" style="left:211px;top:251px;border-color:#8a8a8a"></div>
<div class="a" style="left:243px;top:249px;width:42px;height:16px;background:#ff3c00"></div>
<div class="a" style="left:0;top:286px;width:382px;height:1px;background:#ededed"></div>
<div class="t" id="tr2" style="left:5.80px;letter-spacing:-0.611px;top:270px">Ties</div>
<div class="cb" style="left:211px;top:271px;border-color:#8a8a8a"></div>
<div class="a" style="left:243px;top:269px;width:42px;height:16px;background:#0096c8"></div>
<div class="vs" style="left:193px;top:227px;height:59px;background:#efefef"></div>
<div class="vs" style="left:239px;top:227px;height:59px;background:#efefef"></div>
<div class="vs" style="left:288px;top:227px;height:59px;background:#efefef"></div>
<div class="vs" style="left:319px;top:227px;height:59px;background:#efefef"></div>
<div class="vs" style="left:350px;top:227px;height:59px;background:#efefef"></div>
<svg style="left:0;top:0" width="382" height="300" viewBox="0 0 382 300"><path d="M213.500 236.5 l2.500 2.500 l4 -5" fill="none" stroke="#111" stroke-width="1.600"/><g transform="translate(303.9,237)" stroke="#2f5f9e" stroke-width="1" stroke-linejoin="round"><path d="M0 -7.300 l6.600 3.700 v7.400 l-6.600 3.800 l-6.600 -3.800 v-7.400z" fill="#fff"/><path d="M-6.600 -3.600 l6.600 3.800 v7.400 l-6.600 -3.800z" fill="#fff"/><path d="M0 0.200 l6.600 -3.800 v7.400 l-6.600 3.800z" fill="#fff"/></g><g transform="translate(335,237)"><path d="M-6.900 0 Q0 -7.800 6.900 0 Q0 7.800 -6.900 0z" fill="#fff" stroke="#16213d" stroke-width="1.300"/><circle r="3.300" fill="#16213d"/><circle cx="-1.100" cy="-1.300" r="1" fill="#fff"/></g><g transform="translate(366.4,237)" fill="none"><path d="M-3.300 -2 V-4.300 Q-3.300 -7.600 0 -7.600 Q3 -7.600 3.400 -5" stroke="#2d9be0" stroke-width="1.400"/><rect x="-5.300" y="-1.800" width="10.600" height="8.400" rx="1.200" fill="#fff" stroke="#16213d" stroke-width="1.400"/><circle cx="0" cy="1.300" r="1.400" fill="#2d9be0"/><path d="M-.8 1.500 h1.600 l.5 3.400 h-2.600z" fill="#2d9be0"/></g><g transform="translate(303.9,257)" stroke="#16213d" stroke-width="1.300" stroke-linejoin="round"><path d="M0 -7.300 l6.600 3.700 v7.400 l-6.600 3.800 l-6.600 -3.800 v-7.400z" fill="#fff"/><path d="M-6.600 -3.600 l6.600 3.800 v7.400 l-6.600 -3.800z" fill="#2d9be0"/><path d="M0 0.200 l6.600 -3.800 v7.400 l-6.600 3.800z" fill="#a9d4f0"/></g><g transform="translate(335,257)"><path d="M-6.900 0 Q0 -7.800 6.900 0 Q0 7.800 -6.900 0z" fill="#fff" stroke="#16213d" stroke-width="1.300"/><circle r="3.300" fill="#16213d"/><circle cx="-1.100" cy="-1.300" r="1" fill="#fff"/></g><g transform="translate(366.4,257)" fill="none"><path d="M-3.300 -2 V-4.300 Q-3.300 -7.600 0 -7.600 Q3 -7.600 3.400 -5" stroke="#2d9be0" stroke-width="1.400"/><rect x="-5.300" y="-1.800" width="10.600" height="8.400" rx="1.200" fill="#fff" stroke="#16213d" stroke-width="1.400"/><circle cx="0" cy="1.300" r="1.400" fill="#2d9be0"/><path d="M-.8 1.500 h1.600 l.5 3.400 h-2.600z" fill="#2d9be0"/></g><g transform="translate(303.9,277)" stroke="#16213d" stroke-width="1.300" stroke-linejoin="round"><path d="M0 -7.300 l6.600 3.700 v7.400 l-6.600 3.800 l-6.600 -3.800 v-7.400z" fill="#fff"/><path d="M-6.600 -3.600 l6.600 3.800 v7.400 l-6.600 -3.800z" fill="#2d9be0"/><path d="M0 0.200 l6.600 -3.800 v7.400 l-6.600 3.800z" fill="#a9d4f0"/></g><g transform="translate(335,277)"><path d="M-6.900 0 Q0 -7.800 6.900 0 Q0 7.800 -6.900 0z" fill="#fff" stroke="#16213d" stroke-width="1.300"/><circle r="3.300" fill="#16213d"/><circle cx="-1.100" cy="-1.300" r="1" fill="#fff"/></g><g transform="translate(366.4,277)" fill="none"><path d="M-3.300 -2 V-4.300 Q-3.300 -7.600 0 -7.600 Q3 -7.600 3.400 -5" stroke="#2d9be0" stroke-width="1.400"/><rect x="-5.300" y="-1.800" width="10.600" height="8.400" rx="1.200" fill="#fff" stroke="#16213d" stroke-width="1.400"/><circle cx="0" cy="1.300" r="1.400" fill="#2d9be0"/><path d="M-.8 1.500 h1.600 l.5 3.400 h-2.600z" fill="#2d9be0"/></g></svg>
<div class="a" style="left:184px;top:477px;width:13px;height:2px;background:repeating-linear-gradient(90deg,#a5a5a5 0 2px,transparent 2px 4px)"></div>
<div class="hdr" style="left:0;top:482px;width:382px;height:18px"></div>
<div class="t" id="p5" style="left:5.80px;letter-spacing:-0.148px;top:484px">Categories</div>
<div class="a" style="left:0;top:500px;width:382px;height:23px;background:#f1f1f1"></div>
<div class="vs" style="left:319px;top:503px;height:17px;background:#dcdcdc"></div>
<div class="vs" style="left:350px;top:503px;height:17px;background:#dcdcdc"></div>
<div class="vs" style="left:381px;top:503px;height:17px;background:#dcdcdc"></div>
<div class="t" id="p6" style="left:5.80px;letter-spacing:-0.334px;top:505px">Reference</div>
<div class="a" style="left:0;top:523px;width:382px;height:156px;background:#fff"></div>
<div class="a" style="left:0;top:543px;width:382px;height:1px;background:#ededed"></div>
<div class="t" id="cr0" style="left:5.80px;letter-spacing:0.003px;top:526px">Nodes</div>
<div class="a" style="left:0;top:563px;width:382px;height:1px;background:#ededed"></div>
<div class="t" id="cr1" style="left:5.80px;letter-spacing:-0.763px;top:546px">Bars</div>
<div class="a" style="left:0;top:563px;width:382px;height:20px;background:#f3f3f3"></div>
<div class="a" style="left:0;top:583px;width:382px;height:1px;background:#ededed"></div>
<div class="t" id="cr2" style="left:5.80px;letter-spacing:-0.511px;top:566px">Ties</div>
<div class="a" style="left:0;top:603px;width:382px;height:1px;background:#ededed"></div>
<div class="t" id="cr3" style="left:5.80px;letter-spacing:0.223px;top:586px">Columns</div>
<div class="a" style="left:0;top:623px;width:382px;height:1px;background:#ededed"></div>
<div class="t" id="cr4" style="left:5.80px;letter-spacing:-0.465px;top:606px">Beams</div>
<div class="a" style="left:0;top:643px;width:382px;height:1px;background:#ededed"></div>
<div class="t" id="cr5" style="left:5.80px;letter-spacing:-0.401px;top:626px">Panels</div>
<div class="a" style="left:0;top:663px;width:382px;height:1px;background:#ededed"></div>
<div class="t" id="cr6" style="left:5.80px;letter-spacing:-0.418px;top:646px">Shells</div>
<div class="vs" style="left:319px;top:523px;height:140px;background:#e9e9e9"></div>
<div class="vs" style="left:350px;top:523px;height:140px;background:#e9e9e9"></div>
<svg style="left:0;top:0" width="382" height="700" viewBox="0 0 382 700"><g transform="translate(335,533)"><path d="M-6.900 0 Q0 -7.800 6.900 0 Q0 7.800 -6.900 0z" fill="#fff" stroke="#16213d" stroke-width="1.300"/><circle r="3.300" fill="#16213d"/><circle cx="-1.100" cy="-1.300" r="1" fill="#fff"/></g><g transform="translate(366.4,533)" fill="none"><path d="M-3.300 -2 V-4.300 Q-3.300 -7.600 0 -7.600 Q3 -7.600 3.400 -5" stroke="#2d9be0" stroke-width="1.400"/><rect x="-5.300" y="-1.800" width="10.600" height="8.400" rx="1.200" fill="#fff" stroke="#16213d" stroke-width="1.400"/><circle cx="0" cy="1.300" r="1.400" fill="#2d9be0"/><path d="M-.8 1.500 h1.600 l.5 3.400 h-2.600z" fill="#2d9be0"/></g><g transform="translate(335,553)"><path d="M-6.900 0 Q0 -7.800 6.900 0 Q0 7.800 -6.900 0z" fill="#fff" stroke="#16213d" stroke-width="1.300"/><circle r="3.300" fill="#16213d"/><circle cx="-1.100" cy="-1.300" r="1" fill="#fff"/></g><g transform="translate(366.4,553)" fill="none"><path d="M-3.300 -2 V-4.300 Q-3.300 -7.600 0 -7.600 Q3 -7.600 3.400 -5" stroke="#2d9be0" stroke-width="1.400"/><rect x="-5.300" y="-1.800" width="10.600" height="8.400" rx="1.200" fill="#fff" stroke="#16213d" stroke-width="1.400"/><circle cx="0" cy="1.300" r="1.400" fill="#2d9be0"/><path d="M-.8 1.500 h1.600 l.5 3.400 h-2.600z" fill="#2d9be0"/></g><g transform="translate(335,573)"><path d="M-6.900 0 Q0 -7.800 6.900 0 Q0 7.800 -6.900 0z" fill="#fff" stroke="#16213d" stroke-width="1.300"/><circle r="3.300" fill="#16213d"/><circle cx="-1.100" cy="-1.300" r="1" fill="#fff"/></g><g transform="translate(366.4,573)" fill="none"><path d="M-3.300 -2 V-4.300 Q-3.300 -7.600 0 -7.600 Q3 -7.600 3.400 -5" stroke="#2d9be0" stroke-width="1.400"/><rect x="-5.300" y="-1.800" width="10.600" height="8.400" rx="1.200" fill="#fff" stroke="#16213d" stroke-width="1.400"/><circle cx="0" cy="1.300" r="1.400" fill="#2d9be0"/><path d="M-.8 1.500 h1.600 l.5 3.400 h-2.600z" fill="#2d9be0"/></g><g transform="translate(335,593)"><path d="M-6.900 0 Q0 -7.800 6.900 0 Q0 7.800 -6.900 0z" fill="#fff" stroke="#16213d" stroke-width="1.300"/><circle r="3.300" fill="#16213d"/><circle cx="-1.100" cy="-1.300" r="1" fill="#fff"/></g><g transform="translate(366.4,593)" fill="none"><path d="M-3.300 -2 V-4.300 Q-3.300 -7.600 0 -7.600 Q3 -7.600 3.400 -5" stroke="#2d9be0" stroke-width="1.400"/><rect x="-5.300" y="-1.800" width="10.600" height="8.400" rx="1.200" fill="#fff" stroke="#16213d" stroke-width="1.400"/><circle cx="0" cy="1.300" r="1.400" fill="#2d9be0"/><path d="M-.8 1.500 h1.600 l.5 3.400 h-2.600z" fill="#2d9be0"/></g><g transform="translate(335,613)"><path d="M-6.900 0 Q0 -7.800 6.900 0 Q0 7.800 -6.900 0z" fill="#fff" stroke="#16213d" stroke-width="1.300"/><circle r="3.300" fill="#16213d"/><circle cx="-1.100" cy="-1.300" r="1" fill="#fff"/></g><g transform="translate(366.4,613)" fill="none"><path d="M-3.300 -2 V-4.300 Q-3.300 -7.600 0 -7.600 Q3 -7.600 3.400 -5" stroke="#2d9be0" stroke-width="1.400"/><rect x="-5.300" y="-1.800" width="10.600" height="8.400" rx="1.200" fill="#fff" stroke="#16213d" stroke-width="1.400"/><circle cx="0" cy="1.300" r="1.400" fill="#2d9be0"/><path d="M-.8 1.500 h1.600 l.5 3.400 h-2.600z" fill="#2d9be0"/></g><g transform="translate(335,633)"><path d="M-6.900 0 Q0 -7.800 6.900 0 Q0 7.800 -6.900 0z" fill="#fff" stroke="#16213d" stroke-width="1.300"/><circle r="3.300" fill="#16213d"/><circle cx="-1.100" cy="-1.300" r="1" fill="#fff"/></g><g transform="translate(366.4,633)" fill="none"><path d="M-3.300 -2 V-4.300 Q-3.300 -7.600 0 -7.600 Q3 -7.600 3.400 -5" stroke="#2d9be0" stroke-width="1.400"/><rect x="-5.300" y="-1.800" width="10.600" height="8.400" rx="1.200" fill="#fff" stroke="#16213d" stroke-width="1.400"/><circle cx="0" cy="1.300" r="1.400" fill="#2d9be0"/><path d="M-.8 1.500 h1.600 l.5 3.400 h-2.600z" fill="#2d9be0"/></g><g transform="translate(335,653)"><path d="M-6.900 0 Q0 -7.800 6.900 0 Q0 7.800 -6.900 0z" fill="#fff" stroke="#16213d" stroke-width="1.300"/><circle r="3.300" fill="#16213d"/><circle cx="-1.100" cy="-1.300" r="1" fill="#fff"/></g><g transform="translate(366.4,653)" fill="none"><path d="M-3.300 -2 V-4.300 Q-3.300 -7.600 0 -7.600 Q3 -7.600 3.400 -5" stroke="#2d9be0" stroke-width="1.400"/><rect x="-5.300" y="-1.800" width="10.600" height="8.400" rx="1.200" fill="#fff" stroke="#16213d" stroke-width="1.400"/><circle cx="0" cy="1.300" r="1.400" fill="#2d9be0"/><path d="M-.8 1.500 h1.600 l.5 3.400 h-2.600z" fill="#2d9be0"/></g></svg>
<div class="cb" style="left:3px;top:691px;width:13px;height:13px"></div>
<svg style="left:3px;top:691px" width="13" height="13"><path d="M2.500 6.500 l3 3 l5 -6.500" fill="none" stroke="#111" stroke-width="1.200"/></svg>
<div class="a" style="left:17px;top:690px;width:227px;height:16px;border:1px dotted #222"></div>
<div class="t" id="p7" style="left:18.70px;letter-spacing:-0.095px;top:691px">Represent the structure using layer colours</div>
<div class="t" id="p8" style="left:2.80px;letter-spacing:-0.145px;top:719px">Elements considered in the analysis</div>
<div class="sel" style="left:273px;top:712px;width:106px;height:25px"></div>
<div class="t" id="p9" style="left:278.70px;letter-spacing:-0.261px;top:718px">Stress / Strain</div>
<svg style="left:364px;top:720px" width="12" height="8"><path d="M1.500 1.500 l4 4 l4 -4" fill="none" stroke="#333" stroke-width="1.100"/></svg>
<div class="a" style="left:184px;top:746px;width:13px;height:2px;background:repeating-linear-gradient(90deg,#a5a5a5 0 2px,transparent 2px 4px)"></div>
<div class="a" style="left:385px;top:573px;width:2px;height:13px;background:repeating-linear-gradient(0deg,#a5a5a5 0 2px,transparent 2px 4px)"></div>
<div class="hdr" style="left:0;top:751px;width:382px;height:20px"></div>
<div class="t" id="p10" style="left:2.90px;letter-spacing:0.061px;top:754px">View options</div>
<svg style="left:340px;top:751px" width="42" height="20" viewBox="340 751 42 20"><path d="M347.500 757.500 l4.500 5 l4.500 -5" fill="none" stroke="#111" stroke-width="1.800"/><path d="M367.500 756.500 l9 9 M376.500 756.500 l-9 9" stroke="#111" stroke-width="1.400"/></svg>
<div class="cb" style="left:25px;top:775px;width:13px;height:13px"></div>
<div class="t" id="vo0" style="left:40.90px;letter-spacing:0.082px;top:775px">Display element information</div>
<div class="cb" style="left:25px;top:797px;width:13px;height:13px"></div>
<div class="t" id="vo1" style="left:40.90px;letter-spacing:-0.077px;top:797px">Display texts on the elements</div>
<div class="cb" style="left:25px;top:819px;width:13px;height:13px"></div>
<div class="t" id="vo2" style="left:40.90px;letter-spacing:-0.112px;top:819px">Display the local axes of the elements</div>
<div class="cb" style="left:25px;top:841px;width:13px;height:13px"></div>
<div class="t" id="vo3" style="left:40.90px;letter-spacing:0.002px;top:841px">Draw shells with fill</div>
<div class="cb" style="left:25px;top:863px;width:13px;height:13px"></div>
<div class="t" id="vo4" style="left:40.90px;letter-spacing:0.064px;top:863px">Draw loads with fill</div>
<svg style="left:0;top:0" width="382" height="900" viewBox="0 0 382 900"><path d="M27.500 781.5 l3 3 l5 -6.500" fill="none" stroke="#111" stroke-width="1.200"/><path d="M27.500 803.5 l3 3 l5 -6.500" fill="none" stroke="#111" stroke-width="1.200"/><path d="M27.500 825.5 l3 3 l5 -6.500" fill="none" stroke="#111" stroke-width="1.200"/><path d="M27.500 869.5 l3 3 l5 -6.500" fill="none" stroke="#111" stroke-width="1.200"/><rect x="4.500" y="776.500" width="13" height="9" rx="2.500" fill="#d8ecfa" stroke="#16213d" stroke-width="1"/><path d="M10 785.500 l2 3 l1 -3" fill="#d8ecfa" stroke="#16213d" stroke-width="1"/><path d="M7 779.500 h8 M7 782 h8" stroke="#8cc4ea" stroke-width=".8"/><text x="3.500" y="811" font-family="Liberation Serif" font-weight="bold" font-size="20" fill="#16213d">T</text><path d="M11 819 v10 l7 4 M11 829 l-7 6" fill="none" stroke="#16213d" stroke-width="1.200"/><text x="3" y="823" font-size="5" fill="#2d9be0" font-family="Liberation Sans" font-weight="bold">y</text><text x="15" y="822" font-size="5" fill="#2d9be0" font-family="Liberation Sans" font-weight="bold">x</text><text x="16" y="835" font-size="5" fill="#2d9be0" font-family="Liberation Sans" font-weight="bold">z</text><path d="M4.500 841.500 h13 v13 h-13" fill="#e6e6e6" stroke="#16213d" stroke-width="1" stroke-dasharray="2 1.500"/><path d="M4.500 841 v14" stroke="#16213d" stroke-width="1.600"/><rect x="3" y="840" width="3" height="3" fill="#fff" stroke="#2d9be0" stroke-width=".8"/><rect x="16" y="840" width="3" height="3" fill="#fff" stroke="#2d9be0" stroke-width=".8"/><rect x="3" y="853" width="3" height="3" fill="#fff" stroke="#2d9be0" stroke-width=".8"/><rect x="16" y="853" width="3" height="3" fill="#fff" stroke="#2d9be0" stroke-width=".8"/><rect x="4" y="863" width="4" height="13" fill="#f5b8bc"/><rect x="14" y="863" width="4" height="13" fill="#f5b8bc"/><path d="M4 863 v14 M8 863 v14 M14 863 v14 M18 863 v14 M3 863 h6 M13 863 h6" stroke="#d01e2d" stroke-width="1"/><path d="M11 863 v14" stroke="#16213d" stroke-width="1" stroke-dasharray="2 1.500"/></svg>
<div class="t" id="p11" style="left:23.90px;letter-spacing:-0.026px;top:889px">Dimensions of the nodes</div>
<div class="sel" style="left:293px;top:884px;width:63px;height:23px"></div>
<div class="t" id="p12" style="left:329.30px;letter-spacing:-0.720px;top:888px;">15.0</div>
<div class="t" id="p13" style="left:362.20px;letter-spacing:0.900px;top:889px">cm</div>
<div class="t" id="p14" style="left:23.90px;letter-spacing:-0.361px;top:918px">Text size</div>
<div class="sel" style="left:293px;top:913px;width:63px;height:23px"></div>
<div class="t" id="p15" style="left:322.80px;letter-spacing:-0.583px;top:917px;">100.0</div>
<div class="t" id="p16" style="left:362.50px;letter-spacing:-0.672px;top:918px">%</div>
<div class="a" style="left:0;top:1002px;width:85px;height:19px;background:#cce4f7"></div>
<div class="t b" id="p17" style="left:12.00px;letter-spacing:0.450px;top:1004px;font-size:13px;line-height:15px">Structure</div>
<div class="t" id="p18" style="left:103.00px;letter-spacing:0.045px;top:1003px">Foundations</div>
<svg style="left:8px;top:1023px" width="16" height="16"><circle cx="8" cy="8" r="7.500" fill="#1e8fe0"/><circle cx="8" cy="4.200" r="1.300" fill="#fff"/><path d="M6.200 7 h2.800 v5 M6 12.200 h4.500" stroke="#fff" stroke-width="1.600" fill="none"/></svg>
<div class="t" id="p19" style="left:31.50px;letter-spacing:-0.171px;top:1024px">Stress / Strain - Displacements</div>
<div class="a" style="left:198px;top:1029px;width:5px;height:5px;border-radius:3px;background:#111"></div>
<div class="t" id="p20" style="left:209.50px;letter-spacing:-0.159px;top:1024px">Select an element.</div>
<div class="hdr" style="left:390px;top:159px;width:1530px"></div>
<div class="t" id="w1" style="left:392.50px;letter-spacing:-0.168px;top:163px">Work area</div>
<div class="a" style="left:390px;top:180px;width:1530px;height:20px;background:#a1b7cf"></div>
<div class="a" style="left:390px;top:182px;width:16px;height:16px;background:linear-gradient(#d4263a,#a1141f)"></div>
<svg style="left:390px;top:182px" width="16" height="16"><path d="M3.500 8 l2 -1 v6 l-2 1z M10 4 l2.500 -1 v10 l-2.500 1z M5.500 9.500 l5 -3 v2 l-5 3z M6.500 4 l1.500 -1 l3.500 3 l-1 1.500z" fill="#e6e6e6" stroke="#666" stroke-width=".4"/></svg>
<div class="t" id="w2" style="left:413.50px;letter-spacing:-0.744px;top:183px">3D</div>
<svg style="left:1790px;top:180px" width="130" height="20" viewBox="1790 180 130 20"><g fill="none" stroke="#edf2f8" stroke-width="1.100"><path d="M1805.500 184.500 l-6.500 5.500 l6.500 5.500z M1826.500 184.500 l6.500 5.500 l-6.500 5.500z M1850 190.500 h10 M1876.500 187.500 h7 v7 h-7z M1878.500 187.500 v-2 h7 v7 h-2 M1902.500 185.500 l9 9 M1911.500 185.500 l-9 9"/></g></svg>
<div class="a" style="left:414px;top:200px;width:1506px;height:802px;background:#fff"></div>
<div class="a" style="left:390px;top:224px;width:24px;height:24px;background:#d4e7f4;border:1px solid #7aa7cc"></div>
<svg style="left:390px;top:200px" width="24" height="260" viewBox="390 200 24 260"><g fill="none" stroke-linejoin="round">
<path d="M402 204 v10 l7 4 M402 214 l-6 6" stroke="#2a5f7a" stroke-width="1.200"/>
<path d="M402 229.500 l7 2.500 v7 l-7 4.500 l-7 -4.500 v-7z" fill="#cfe8f8" stroke="#16213d" stroke-width="1.100"/><path d="M402 229.500 l7 2.500 l-7 2 l-7 -2z" fill="#fff" stroke="#16213d" stroke-width="1.100"/><path d="M402 234 v9.500 M395 232 l7 2 l7 -2" stroke="#16213d" stroke-width="1.100"/><path d="M402 234 l7 -2 v7 l-7 4.500z" fill="#7dbde6" stroke="#16213d" stroke-width="1.100"/>
<circle cx="402" cy="257" r="3.200" fill="#111"/><path d="M398 258 q-6 3 3 4 q8 0 8 -3 q-1 -2 -3 -2" stroke="#111" stroke-width="1"/><path d="M404 261 l2.500 2 M404 261 l2.500 -1.500" stroke="#111" stroke-width="1"/>
<circle cx="402" cy="279" r="1.800" stroke="#111" stroke-width="1"/><path d="M402 281 v9" stroke="#111" stroke-width="1.200"/><path d="M399 283 q-6 2 -1 5 q5 2 9 -1 q3 -3 -3 -4" stroke="#111" stroke-width="1"/><path d="M403 288.500 l2.500 .5 l-1 -2.500" stroke="#111" stroke-width="1"/>
<path d="M390 299.500 h23" stroke="#c9c9c9"/>
<rect x="396.500" y="310.500" width="5.500" height="11" fill="#a9d4f0" stroke="#111"/><rect x="402" y="310.500" width="5.500" height="11" fill="#ffc0c0" stroke="#e01010"/><path d="M402 309 v14" stroke="#111" stroke-dasharray="1.500 1"/>
<path d="M396.500 334.500 h11 v11 h-11z" fill="#a9d4f0" stroke="#111"/><path d="M396.500 334.500 h11 l-11 11z" fill="#4fe07a" stroke="#111"/><path d="M396.500 345.500 l11 -11" stroke="#111" stroke-dasharray="1.500 1"/><path d="M395 347 l14 -14" stroke="#111" stroke-width=".8"/>
<path d="M396.500 359.500 h11 v10 h-11z" fill="#a9d4f0" stroke="#111" stroke-width="1.200"/><path d="M396.500 359.500 h11 v5 h-11z" fill="#b9b6ee" stroke="#111" stroke-width="1.200"/><path d="M397 364.500 h10" stroke="#111" stroke-dasharray="1.500 1"/>
<path d="M402 381.500 l6.500 3 v7 l-6.500 3.500 l-6.500 -3.500 v-7z" fill="#bfe0f4" stroke="#16213d"/><path d="M395.500 384.500 l6.500 3 l6.500 -3 M395.500 388 l6.500 3 l6.500 -3 M402 387.500 v7.500" stroke="#16213d"/><path d="M402 387.500 l6.500 -3 v3.500 l-6.500 3z" fill="#f08a8a"/><path d="M402 391 l6.500 -3 v3.500 l-6.500 3.500z" fill="#8ad08a"/>
<path d="M394.500 412 q7.500 -8 15 0 q-7.500 8 -15 0z" stroke="#111" stroke-width="1.200"/><circle cx="402" cy="412" r="3" fill="#111"/><path d="M396 418 l12 -12" stroke="#111" stroke-width="1.300"/>
<path d="M390 427.500 h23" stroke="#c9c9c9"/>
<text x="394.500" y="444" font-size="9.500" font-weight="bold" fill="#16213d" font-family="Liberation Sans" textLength="11" lengthAdjust="spacingAndGlyphs">3D</text><circle cx="404.500" cy="448" r="3.300" stroke="#555" stroke-width="1.300" stroke-dasharray="1.600 1"/><circle cx="404.500" cy="448" r="1.300" stroke="#555" stroke-width=".8"/>
</g></svg>
<svg style="left:0;top:0" width="1920" height="1040" viewBox="0 0 1920 1040">
<defs><clipPath id="cv"><rect x="414" y="200" width="1506" height="801"/></clipPath></defs><g clip-path="url(#cv)">
<polygon points="1087.4,289.9 1152.7,312.9 1151.3,317.1 1086.0,294.1" fill="#b42d06"/>
<polygon points="1152.7,312.9 1232.7,340.9 1231.3,345.1 1151.3,317.1" fill="#b42d06"/>
<polygon points="1232.7,340.9 1286.7,358.9 1285.3,363.1 1231.3,345.1" fill="#b42d06"/>
<polygon points="1286.7,358.9 1390.7,394.9 1389.3,399.1 1285.3,363.1" fill="#b42d06"/>
<polygon points="1066.9,293.1 1131.9,319.0 1130.1,323.6 1065.1,297.7" fill="#c83306"/>
<polygon points="1131.8,318.9 1207.8,345.6 1206.2,350.4 1130.2,323.7" fill="#c83306"/>
<polygon points="1207.9,345.7 1313.5,385.7 1311.7,390.3 1206.1,350.3" fill="#c83306"/>
<polygon points="1313.4,385.6 1445.8,430.6 1444.2,435.4 1311.8,390.4" fill="#c83306"/>
<polygon points="1130.4,319.4 1151.4,313.1 1152.6,316.9 1131.6,323.2" fill="#b42d06"/>
<polygon points="1206.6,346.0 1231.6,341.0 1232.4,345.0 1207.4,350.0" fill="#b42d06"/>
<polygon points="1347.7,397.6 1527.7,449.6 1526.3,454.4 1346.3,402.4" fill="#b42d06"/>
<polygon points="1527.7,449.6 1663.7,488.6 1662.3,493.4 1526.3,454.4" fill="#b42d06"/>
<polygon points="1089.2,291.9 1091.5,339.9 1086.5,340.1 1084.2,292.1" fill="#c83306"/>
<polygon points="1144.5,326.0 1144.5,352.0 1139.5,352.0 1139.5,326.0" fill="#c83306"/>
<polygon points="1383.4,412.7 1373.4,459.7 1366.6,458.3 1376.6,411.3" fill="#c83306"/>
<polygon points="1383.4,412.7 1373.4,459.7 1372.5,459.5 1382.5,412.5" fill="#df3f0b"/>
<polygon points="1377.5,411.5 1367.5,458.5 1366.6,458.3 1376.6,411.3" fill="#df3f0b"/>
<polygon points="1289.2,361.3 1284.2,414.3 1277.8,413.7 1282.8,360.7" fill="#c83306"/>
<polygon points="1010.0,243.7 1024.2,355.7 1019.8,356.3 1005.0,244.3" fill="#c83306"/>
<polygon points="1010.0,243.7 1024.2,355.7 1023.6,355.8 1009.3,243.8" fill="#df3f0b"/>
<polygon points="1005.7,244.2 1020.4,356.2 1019.8,356.3 1005.0,244.3" fill="#df3f0b"/>
<polygon points="1007.9,243.9 1022.4,356.0 1021.6,356.0 1007.1,244.1" fill="#e2420e"/>
<polygon points="1066.7,259.8 1075.0,382.3 1070.0,382.7 1061.3,260.2" fill="#c83306"/>
<polygon points="1066.7,259.8 1075.0,382.3 1074.3,382.4 1066.0,259.9" fill="#df3f0b"/>
<polygon points="1062.0,260.1 1070.7,382.6 1070.0,382.7 1061.3,260.2" fill="#df3f0b"/>
<polygon points="1064.4,260.0 1072.9,382.5 1072.1,382.5 1063.6,260.0" fill="#e2420e"/>
<polygon points="1133.7,280.9 1137.4,413.9 1130.6,414.1 1126.3,281.1" fill="#c83306"/>
<polygon points="1133.7,280.9 1137.4,413.9 1136.4,413.9 1132.7,280.9" fill="#df3f0b"/>
<polygon points="1127.3,281.1 1131.6,414.1 1130.6,414.1 1126.3,281.1" fill="#df3f0b"/>
<polygon points="1130.6,281.0 1134.5,414.0 1133.5,414.0 1129.4,281.0" fill="#e2420e"/>
<polygon points="1217.2,307.7 1211.8,450.1 1203.2,449.9 1207.8,307.3" fill="#c83306"/>
<polygon points="1217.2,307.7 1211.8,450.1 1210.6,450.1 1215.9,307.6" fill="#df3f0b"/>
<polygon points="1209.1,307.4 1204.4,449.9 1203.2,449.9 1207.8,307.3" fill="#df3f0b"/>
<polygon points="1213.3,307.5 1208.2,450.0 1206.8,450.0 1211.7,307.5" fill="#e2420e"/>
<polygon points="1322.0,340.6 1300.0,493.6 1292.0,492.4 1313.0,339.4" fill="#c83306"/>
<polygon points="1322.0,340.6 1300.0,493.6 1298.9,493.4 1320.7,340.5" fill="#df3f0b"/>
<polygon points="1314.3,339.5 1293.1,492.6 1292.0,492.4 1313.0,339.4" fill="#df3f0b"/>
<polygon points="1318.2,340.1 1296.6,493.1 1295.4,492.9 1316.8,339.9" fill="#e2420e"/>
<polygon points="1458.9,383.3 1449.9,440.8 1440.1,439.2 1449.1,381.7" fill="#c83306"/>
<polygon points="1458.9,383.3 1449.9,440.8 1448.6,440.6 1457.6,383.1" fill="#df3f0b"/>
<polygon points="1450.4,381.9 1441.4,439.4 1440.1,439.2 1449.1,381.7" fill="#df3f0b"/>
<polygon points="1645.0,443.2 1562.5,627.0 1553.5,623.0 1635.0,438.8" fill="#c83306"/>
<polygon points="1645.0,443.2 1562.5,627.0 1561.3,626.5 1643.6,442.6" fill="#df3f0b"/>
<polygon points="1636.4,439.4 1554.7,623.5 1553.5,623.0 1635.0,438.8" fill="#df3f0b"/>
<polygon points="1640.8,441.4 1558.7,625.3 1557.3,624.7 1639.2,440.6" fill="#e2420e"/>
<polygon points="1667.0,494.0 1628.6,568.8 1621.4,565.2 1659.0,490.0" fill="#c83306"/>
<polygon points="1667.0,494.0 1628.6,568.8 1627.6,568.3 1665.9,493.5" fill="#df3f0b"/>
<polygon points="1660.1,490.5 1622.4,565.7 1621.4,565.2 1659.0,490.0" fill="#df3f0b"/>
<polygon points="1663.6,492.3 1625.6,567.3 1624.4,566.7 1662.4,491.7" fill="#e2420e"/>
<polygon points="1606.6,494.5 1663.6,488.0 1664.4,495.0 1607.4,501.5" fill="#c83306"/>
<polygon points="1606.6,494.5 1663.6,488.0 1663.7,489.0 1606.7,495.5" fill="#df3f0b"/>
<polygon points="1607.3,500.5 1664.3,494.0 1664.4,495.0 1607.4,501.5" fill="#df3f0b"/>
<polygon points="1008.1,241.8 1064.6,257.8 1063.4,262.2 1006.9,246.2" fill="#c83306"/>
<polygon points="1064.7,257.7 1130.7,278.7 1129.3,283.3 1063.3,262.3" fill="#c83306"/>
<polygon points="1130.8,278.6 1213.3,305.1 1211.7,309.9 1129.2,283.4" fill="#c83306"/>
<polygon points="1213.3,304.9 1318.3,337.4 1316.7,342.6 1211.7,310.1" fill="#c83306"/>
<polygon points="1318.3,337.3 1454.8,379.8 1453.2,385.2 1316.7,342.7" fill="#c83306"/>
<polygon points="1454.9,379.6 1640.9,438.1 1639.1,443.9 1453.1,385.4" fill="#c83306"/>
<polygon points="775.1,263.0 816.1,391.0 809.9,393.0 768.9,265.0" fill="#c83306"/>
<polygon points="775.1,263.0 816.1,391.0 815.2,391.3 774.2,263.3" fill="#df3f0b"/>
<polygon points="769.8,264.7 810.8,392.7 809.9,393.0 768.9,265.0" fill="#df3f0b"/>
<polygon points="859.1,238.5 896.1,351.0 889.9,353.0 852.9,240.5" fill="#c83306"/>
<polygon points="859.1,238.5 896.1,351.0 895.2,351.3 858.2,238.8" fill="#df3f0b"/>
<polygon points="853.8,240.2 890.8,352.7 889.9,353.0 852.9,240.5" fill="#df3f0b"/>
<polygon points="939.9,240.4 959.9,341.4 954.1,342.6 934.1,241.6" fill="#c83306"/>
<polygon points="939.9,240.4 959.9,341.4 959.1,341.6 939.1,240.6" fill="#df3f0b"/>
<polygon points="934.9,241.4 954.9,342.4 954.1,342.6 934.1,241.6" fill="#df3f0b"/>
<polygon points="856.1,238.9 1007.6,243.4 1007.4,248.4 855.9,243.9" fill="#c83306"/>
<polygon points="856.1,238.9 1007.6,243.4 1007.6,244.1 856.1,239.6" fill="#df3f0b"/>
<polygon points="855.9,243.2 1007.4,247.7 1007.4,248.4 855.9,243.9" fill="#df3f0b"/>
<polygon points="904.0,258.0 1064.0,259.0 1064.0,267.0 904.0,266.0" fill="#c83306"/>
<polygon points="904.0,258.0 1064.0,259.0 1064.0,260.2 904.0,259.2" fill="#df3f0b"/>
<polygon points="904.0,264.9 1064.0,265.9 1064.0,267.0 904.0,266.0" fill="#df3f0b"/>
<polygon points="962.5,281.3 1130.0,279.8 1130.0,289.8 962.5,291.3" fill="#c83306"/>
<polygon points="962.5,281.3 1130.0,279.8 1130.0,281.2 962.5,282.7" fill="#df3f0b"/>
<polygon points="962.5,289.9 1130.0,288.4 1130.0,289.8 962.5,291.3" fill="#df3f0b"/>
<polygon points="1038.8,312.5 1212.3,306.0 1212.7,318.5 1039.2,325.0" fill="#c83306"/>
<polygon points="1038.8,312.5 1212.3,306.0 1212.3,307.8 1038.8,314.3" fill="#df3f0b"/>
<polygon points="1039.2,323.2 1212.7,316.7 1212.7,318.5 1039.2,325.0" fill="#df3f0b"/>
<polygon points="1138.4,354.3 1316.9,338.3 1318.1,352.3 1139.6,368.3" fill="#c83306"/>
<polygon points="1138.4,354.3 1316.9,338.3 1317.1,340.3 1138.6,356.3" fill="#df3f0b"/>
<polygon points="1139.4,366.3 1317.9,350.3 1318.1,352.3 1139.6,368.3" fill="#df3f0b"/>
<polygon points="1277.7,413.4 1452.7,380.9 1455.3,394.7 1280.3,427.2" fill="#c83306"/>
<polygon points="1277.7,413.4 1452.7,380.9 1453.1,382.9 1278.1,415.4" fill="#df3f0b"/>
<polygon points="1279.9,425.3 1454.9,392.8 1455.3,394.7 1280.3,427.2" fill="#df3f0b"/>
<polygon points="679.2,292.5 855.3,239.0 856.7,243.8 680.8,297.7" fill="#c83306"/>
<polygon points="679.2,292.5 855.3,239.0 855.5,239.7 679.4,293.2" fill="#df3f0b"/>
<polygon points="680.6,297.0 856.5,243.1 856.7,243.8 680.8,297.7" fill="#df3f0b"/>
<polygon points="709.6,320.1 902.8,258.2 905.2,265.8 712.4,328.7" fill="#c83306"/>
<polygon points="709.6,320.1 902.8,258.2 903.1,259.3 710.0,321.3" fill="#df3f0b"/>
<polygon points="712.0,327.5 904.9,264.8 905.2,265.8 712.4,328.7" fill="#df3f0b"/>
<polygon points="709.6,320.1 902.8,258.2 903.5,260.5 710.4,322.7" fill="#ee4108"/>
<polygon points="712.4,328.7 905.2,265.8 904.9,264.9 712.1,327.7" fill="#b02c05"/>
<polygon points="749.4,358.1 960.8,281.6 964.2,291.0 752.6,367.1" fill="#c83306"/>
<polygon points="749.4,358.1 960.8,281.6 961.3,282.9 749.8,359.4" fill="#df3f0b"/>
<polygon points="752.2,365.8 963.7,289.7 964.2,291.0 752.6,367.1" fill="#df3f0b"/>
<polygon points="749.4,358.1 960.8,281.6 961.8,284.4 750.4,360.8" fill="#ee4108"/>
<polygon points="752.6,367.1 964.2,291.0 963.8,289.9 752.2,366.0" fill="#b02c05"/>
<polygon points="803.0,406.6 1036.7,312.9 1041.3,324.6 807.0,416.8" fill="#c83306"/>
<polygon points="803.0,406.6 1036.7,312.9 1037.3,314.6 803.5,408.0" fill="#df3f0b"/>
<polygon points="806.5,415.4 1040.7,322.9 1041.3,324.6 807.0,416.8" fill="#df3f0b"/>
<polygon points="803.0,406.6 1036.7,312.9 1038.1,316.4 804.2,409.6" fill="#ee4108"/>
<polygon points="807.0,416.8 1041.3,324.6 1040.8,323.2 806.5,415.6" fill="#b02c05"/>
<polygon points="876.4,476.6 1136.0,355.0 1142.0,367.7 881.6,487.9" fill="#c83306"/>
<polygon points="876.4,476.6 1136.0,355.0 1136.9,356.8 877.1,478.2" fill="#df3f0b"/>
<polygon points="880.9,486.3 1141.1,365.9 1142.0,367.7 881.6,487.9" fill="#df3f0b"/>
<polygon points="876.4,476.6 1136.0,355.0 1137.8,358.8 877.9,480.0" fill="#ee4108"/>
<polygon points="881.6,487.9 1142.0,367.7 1141.2,366.1 881.0,486.6" fill="#b02c05"/>
<polygon points="989.5,578.0 1275.5,414.2 1282.5,426.4 995.5,588.5" fill="#c83306"/>
<polygon points="989.5,578.0 1275.5,414.2 1276.5,415.9 990.4,579.5" fill="#df3f0b"/>
<polygon points="994.6,587.0 1281.5,424.7 1282.5,426.4 995.5,588.5" fill="#df3f0b"/>
<polygon points="989.5,578.0 1275.5,414.2 1277.6,417.9 991.3,581.2" fill="#ee4108"/>
<polygon points="995.5,588.5 1282.5,426.4 1281.6,424.9 994.8,587.2" fill="#b02c05"/>
<circle cx="856.0" cy="241.4" r="2.5" fill="#c83306"/>
<circle cx="904.0" cy="262.0" r="4.0" fill="#c83306"/>
<circle cx="962.5" cy="286.3" r="5.0" fill="#c83306"/>
<circle cx="1039.0" cy="318.8" r="6.2" fill="#c83306"/>
<circle cx="1139.0" cy="361.3" r="7.0" fill="#c83306"/>
<circle cx="1279.0" cy="420.3" r="7.0" fill="#c83306"/>
<polygon points="712.2,328.3 737.3,320.2 714.7,336.0" fill="#bf3006"/>
<polygon points="1064.0,266.6 1044.8,266.5 1063.9,272.2" fill="#bf3006"/>
<polygon points="752.5,366.6 779.9,356.7 755.4,374.7" fill="#bf3006"/>
<polygon points="1130.0,289.3 1109.9,289.5 1130.1,296.3" fill="#bf3006"/>
<polygon points="806.8,416.3 837.2,404.2 810.5,425.5" fill="#bf3006"/>
<polygon points="1212.7,317.9 1191.9,318.7 1213.0,326.6" fill="#bf3006"/>
<polygon points="881.4,487.4 915.2,471.6 886.1,497.6" fill="#bf3006"/>
<polygon points="1318.1,351.6 1296.6,353.5 1318.9,361.4" fill="#bf3006"/>
<polygon points="995.2,588.0 1032.4,566.8 1000.5,597.3" fill="#bf3006"/>
<polygon points="1455.2,394.0 1434.2,397.9 1456.9,403.6" fill="#bf3006"/>
<line x1="1347.0" y1="400.0" x2="1640.0" y2="441.0" stroke="#1b7090" stroke-width="1.3"/>
<line x1="1310.0" y1="408.0" x2="1640.0" y2="441.0" stroke="#1b7090" stroke-width="1.3"/>
<line x1="1454.0" y1="382.5" x2="1607.0" y2="498.0" stroke="#1b7090" stroke-width="1.3"/>
<line x1="1460.0" y1="388.0" x2="1560.0" y2="470.0" stroke="#1b7090" stroke-width="1.3"/>
<line x1="1195.0" y1="462.0" x2="1404.0" y2="492.0" stroke="#1b7090" stroke-width="1.3"/>
<line x1="1270.0" y1="420.0" x2="1404.0" y2="455.0" stroke="#1b7090" stroke-width="1.3"/>
<line x1="1500.0" y1="520.0" x2="1607.0" y2="500.0" stroke="#1b7090" stroke-width="1.3"/>
<line x1="1520.0" y1="505.0" x2="1607.0" y2="497.0" stroke="#1b7090" stroke-width="1.3"/>
<line x1="1527.0" y1="452.0" x2="1625.0" y2="566.0" stroke="#1b7090" stroke-width="1.3"/>
<line x1="1405.0" y1="430.0" x2="1640.0" y2="441.0" stroke="#1b7090" stroke-width="1.3"/>
<line x1="1525.0" y1="572.0" x2="1557.0" y2="622.0" stroke="#1b7090" stroke-width="1.3"/>
<polygon points="1197.1,457.5 1401.4,566.6 1396.6,575.4 1192.9,465.5" fill="#b42d06"/>
<polygon points="1197.1,457.5 1401.4,566.6 1400.7,567.8 1196.5,458.6" fill="#df3f0b"/>
<polygon points="1193.5,464.4 1397.3,574.2 1396.6,575.4 1192.9,465.5" fill="#df3f0b"/>
<polygon points="1279.7,411.6 1553.4,471.1 1551.6,478.9 1278.3,418.4" fill="#b42d06"/>
<polygon points="1279.7,411.6 1553.4,471.1 1553.1,472.2 1279.5,412.5" fill="#df3f0b"/>
<polygon points="1278.5,417.5 1551.9,477.8 1551.6,478.9 1278.3,418.4" fill="#df3f0b"/>
<polygon points="1347.9,397.7 1608.1,495.2 1605.9,500.8 1346.1,402.3" fill="#b42d06"/>
<polygon points="1558.6,477.3 1472.6,708.1 1461.4,703.9 1546.4,472.7" fill="#c83306"/>
<polygon points="1558.6,477.3 1472.6,708.1 1471.1,707.5 1556.9,476.6" fill="#df3f0b"/>
<polygon points="1548.1,473.4 1462.9,704.5 1461.4,703.9 1546.4,472.7" fill="#df3f0b"/>
<polygon points="1553.5,475.4 1467.9,706.3 1466.1,705.7 1551.5,474.6" fill="#e2420e"/>
<polygon points="1645.5,443.4 1563.0,627.2 1553.0,622.8 1634.5,438.6" fill="#c83306"/>
<polygon points="1645.5,443.4 1563.0,627.2 1561.6,626.6 1643.9,442.8" fill="#df3f0b"/>
<polygon points="1636.1,439.2 1554.4,623.4 1553.0,622.8 1634.5,438.6" fill="#df3f0b"/>
<polygon points="1640.9,441.4 1558.8,625.4 1557.2,624.6 1639.1,440.6" fill="#e2420e"/>
<polygon points="1396.6,567.2 1550.1,471.2 1554.9,478.8 1401.4,574.8" fill="#c83306"/>
<polygon points="1396.6,567.2 1550.1,471.2 1550.8,472.3 1397.3,568.3" fill="#df3f0b"/>
<polygon points="1400.7,573.7 1554.2,477.7 1554.9,478.8 1401.4,574.8" fill="#df3f0b"/>
<polygon points="1550.9,470.8 1638.4,436.8 1641.6,445.2 1554.1,479.2" fill="#c83306"/>
<polygon points="1550.9,470.8 1638.4,436.8 1638.8,438.0 1551.3,472.0" fill="#df3f0b"/>
<polygon points="1553.7,478.0 1641.2,444.0 1641.6,445.2 1554.1,479.2" fill="#df3f0b"/>
<polygon points="842.9,381.7 860.9,444.2 855.1,445.8 837.1,383.3" fill="#c83306"/>
<polygon points="842.9,381.7 860.9,444.2 860.1,444.4 842.1,381.9" fill="#df3f0b"/>
<polygon points="837.9,383.1 855.9,445.6 855.1,445.8 837.1,383.3" fill="#df3f0b"/>
<polygon points="896.2,420.3 911.2,489.3 904.8,490.7 889.8,421.7" fill="#c83306"/>
<polygon points="896.2,420.3 911.2,489.3 910.3,489.5 895.3,420.5" fill="#df3f0b"/>
<polygon points="890.7,421.5 905.7,490.5 904.8,490.7 889.8,421.7" fill="#df3f0b"/>
<polygon points="956.7,469.3 971.7,544.3 964.3,545.7 949.3,470.7" fill="#c83306"/>
<polygon points="956.7,469.3 971.7,544.3 970.6,544.5 955.6,469.5" fill="#df3f0b"/>
<polygon points="950.4,470.5 965.4,545.5 964.3,545.7 949.3,470.7" fill="#df3f0b"/>
<polygon points="1046.5,543.5 1053.5,611.5 1044.5,612.5 1037.5,544.5" fill="#c83306"/>
<polygon points="1046.5,543.5 1053.5,611.5 1052.2,611.7 1045.2,543.7" fill="#df3f0b"/>
<polygon points="1038.8,544.3 1045.8,612.3 1044.5,612.5 1037.5,544.5" fill="#df3f0b"/>
<polygon points="1160.5,622.0 1160.5,710.0 1149.5,710.0 1149.5,622.0" fill="#c83306"/>
<polygon points="1160.5,622.0 1160.5,710.0 1159.0,710.0 1159.0,622.0" fill="#df3f0b"/>
<polygon points="1151.0,622.0 1151.0,710.0 1149.5,710.0 1149.5,622.0" fill="#df3f0b"/>
<polygon points="841.5,380.5 894.5,419.0 891.5,423.0 838.5,384.5" fill="#c83306"/>
<polygon points="894.6,419.1 954.6,468.1 951.4,471.9 891.4,422.9" fill="#c83306"/>
<polygon points="955.2,467.3 1044.2,541.3 1039.8,546.7 950.8,472.7" fill="#c83306"/>
<polygon points="1044.0,541.1 1157.0,619.1 1153.0,624.9 1040.0,546.9" fill="#c83306"/>
<polygon points="801.9,344.5 813.9,394.5 810.1,395.5 798.1,345.5" fill="#c83306"/>
<polygon points="708.3,364.6 799.3,342.1 800.7,347.9 709.7,370.4" fill="#c83306"/>
<polygon points="708.3,364.6 799.3,342.1 799.5,342.9 708.5,365.4" fill="#df3f0b"/>
<polygon points="709.5,369.6 800.5,347.1 800.7,347.9 709.7,370.4" fill="#df3f0b"/>
<polygon points="708.3,364.6 799.3,342.1 799.7,343.8 708.7,366.3" fill="#ee4108"/>
<polygon points="709.7,370.4 800.7,347.9 800.5,347.2 709.5,369.7" fill="#b02c05"/>
<polygon points="742.2,400.6 839.2,379.1 840.8,385.9 743.8,407.4" fill="#c83306"/>
<polygon points="742.2,400.6 839.2,379.1 839.5,380.0 742.5,401.5" fill="#df3f0b"/>
<polygon points="743.5,406.5 840.5,385.0 840.8,385.9 743.8,407.4" fill="#df3f0b"/>
<polygon points="742.2,400.6 839.2,379.1 839.7,381.1 742.7,402.6" fill="#ee4108"/>
<polygon points="743.8,407.4 840.8,385.9 840.6,385.1 743.6,406.6" fill="#b02c05"/>
<polygon points="781.6,441.7 892.1,417.1 893.9,424.9 783.4,449.5" fill="#c83306"/>
<polygon points="781.6,441.7 892.1,417.1 892.4,418.2 781.9,442.8" fill="#df3f0b"/>
<polygon points="783.1,448.4 893.6,423.8 893.9,424.9 783.4,449.5" fill="#df3f0b"/>
<polygon points="781.6,441.7 892.1,417.1 892.7,419.4 782.2,444.0" fill="#ee4108"/>
<polygon points="783.4,449.5 893.9,424.9 893.7,424.0 783.2,448.6" fill="#b02c05"/>
<polygon points="836.7,501.3 951.7,465.7 954.3,474.3 839.3,509.9" fill="#c83306"/>
<polygon points="836.7,501.3 951.7,465.7 952.0,466.9 837.0,502.5" fill="#df3f0b"/>
<polygon points="839.0,508.7 954.0,473.1 954.3,474.3 839.3,509.9" fill="#df3f0b"/>
<polygon points="836.7,501.3 951.7,465.7 952.5,468.3 837.5,503.9" fill="#ee4108"/>
<polygon points="839.3,509.9 954.3,474.3 954.0,473.3 839.0,508.9" fill="#b02c05"/>
<polygon points="908.4,580.0 1040.4,539.0 1043.6,549.0 911.6,590.0" fill="#c83306"/>
<polygon points="908.4,580.0 1040.4,539.0 1040.9,540.4 908.9,581.4" fill="#df3f0b"/>
<polygon points="911.1,588.6 1043.1,547.6 1043.6,549.0 911.6,590.0" fill="#df3f0b"/>
<polygon points="908.4,580.0 1040.4,539.0 1041.4,542.0 909.4,583.0" fill="#ee4108"/>
<polygon points="911.6,590.0 1043.6,549.0 1043.2,547.8 911.2,588.8" fill="#b02c05"/>
<polygon points="1011.9,693.3 1151.9,616.3 1158.1,627.7 1018.1,704.7" fill="#c83306"/>
<polygon points="1011.9,693.3 1151.9,616.3 1152.7,617.9 1012.7,694.9" fill="#df3f0b"/>
<polygon points="1017.3,703.1 1157.3,626.1 1158.1,627.7 1018.1,704.7" fill="#df3f0b"/>
<polygon points="1011.9,693.3 1151.9,616.3 1153.7,619.7 1013.7,696.7" fill="#ee4108"/>
<polygon points="1018.1,704.7 1158.1,627.7 1157.4,626.3 1017.4,703.3" fill="#b02c05"/>
<polygon points="743.9,407.0 776.6,395.6 777.3,397.4 746.1,412.2" fill="#c83306"/>
<polygon points="783.3,449.0 820.8,436.1 821.6,437.9 785.7,455.0" fill="#c83306"/>
<polygon points="838.4,509.6 877.8,492.3 878.7,494.0 841.6,516.0" fill="#c83306"/>
<polygon points="910.1,589.7 955.7,569.8 956.7,571.5 913.9,597.1" fill="#c83306"/>
<polygon points="1013.8,705.3 1063.4,671.3 1064.6,672.8 1020.2,713.5" fill="#c83306"/>
<polygon points="710.6,366.0 744.6,402.5 741.4,405.5 707.4,369.0" fill="#c83306"/>
<polygon points="744.9,402.2 784.4,443.8 780.6,447.4 741.1,405.8" fill="#c83306"/>
<polygon points="784.7,443.5 840.2,503.5 835.8,507.7 780.3,447.7" fill="#c83306"/>
<polygon points="840.6,503.3 912.6,582.7 907.4,587.3 835.4,507.9" fill="#c83306"/>
<polygon points="840.6,503.3 912.6,582.7 911.8,583.3 839.8,503.9" fill="#df3f0b"/>
<polygon points="836.2,507.3 908.2,586.7 907.4,587.3 835.4,507.9" fill="#df3f0b"/>
<polygon points="912.8,582.4 1017.8,696.4 1012.2,701.6 907.2,587.6" fill="#c83306"/>
<polygon points="912.8,582.4 1017.8,696.4 1017.0,697.1 912.0,583.1" fill="#df3f0b"/>
<polygon points="908.0,586.9 1013.0,700.9 1012.2,701.6 907.2,587.6" fill="#df3f0b"/>
<polygon points="670.5,261.6 739.5,427.6 732.5,430.4 663.5,264.4" fill="#c83306"/>
<polygon points="670.5,261.6 739.5,427.6 738.5,428.0 669.5,262.0" fill="#df3f0b"/>
<polygon points="664.5,264.0 733.5,430.0 732.5,430.4 663.5,264.4" fill="#df3f0b"/>
<polygon points="667.6,262.8 736.6,428.8 735.4,429.2 666.4,263.2" fill="#e2420e"/>
<polygon points="701.9,287.4 772.9,465.4 765.1,468.6 694.1,290.6" fill="#c83306"/>
<polygon points="701.9,287.4 772.9,465.4 771.8,465.9 700.8,287.9" fill="#df3f0b"/>
<polygon points="695.2,290.1 766.2,468.1 765.1,468.6 694.1,290.6" fill="#df3f0b"/>
<polygon points="698.6,288.7 769.6,466.7 768.4,467.3 697.4,289.3" fill="#e2420e"/>
<polygon points="741.7,321.0 813.2,516.5 804.8,519.5 733.3,324.0" fill="#c83306"/>
<polygon points="741.7,321.0 813.2,516.5 812.0,516.9 740.5,321.4" fill="#df3f0b"/>
<polygon points="734.5,323.6 806.0,519.1 804.8,519.5 733.3,324.0" fill="#df3f0b"/>
<polygon points="738.2,322.3 809.7,517.8 808.3,518.2 736.8,322.7" fill="#e2420e"/>
<polygon points="795.7,365.4 866.7,578.4 857.3,581.6 786.3,368.6" fill="#c83306"/>
<polygon points="795.7,365.4 866.7,578.4 865.4,578.9 794.4,365.9" fill="#df3f0b"/>
<polygon points="787.6,368.1 858.6,581.1 857.3,581.6 786.3,368.6" fill="#df3f0b"/>
<polygon points="791.8,366.7 862.8,579.7 861.2,580.3 790.2,367.3" fill="#e2420e"/>
<polygon points="871.8,429.4 937.8,664.4 926.2,667.6 860.2,432.6" fill="#c83306"/>
<polygon points="871.8,429.4 937.8,664.4 936.2,664.8 870.2,429.8" fill="#df3f0b"/>
<polygon points="861.8,432.2 927.8,667.2 926.2,667.6 860.2,432.6" fill="#df3f0b"/>
<polygon points="866.9,430.7 932.9,665.7 931.1,666.3 865.1,431.3" fill="#e2420e"/>
<polygon points="987.1,525.6 1036.1,780.6 1021.9,783.4 972.9,528.4" fill="#c83306"/>
<polygon points="987.1,525.6 1036.1,780.6 1034.1,781.0 985.1,526.0" fill="#df3f0b"/>
<polygon points="974.9,528.0 1023.9,783.0 1021.9,783.4 972.9,528.4" fill="#df3f0b"/>
<polygon points="981.1,526.8 1030.1,781.8 1027.9,782.2 978.9,527.2" fill="#e2420e"/>
<polygon points="681.5,291.3 712.7,319.1 709.3,322.9 678.5,294.7" fill="#c83306"/>
<polygon points="681.5,291.3 712.7,319.1 712.2,319.7 681.1,291.8" fill="#df3f0b"/>
<polygon points="678.9,294.2 709.8,322.3 709.3,322.9 678.5,294.7" fill="#df3f0b"/>
<polygon points="712.7,319.2 752.9,357.0 749.1,361.0 709.3,322.8" fill="#c83306"/>
<polygon points="712.7,319.2 752.9,357.0 752.4,357.6 712.2,319.7" fill="#df3f0b"/>
<polygon points="709.8,322.3 749.6,360.4 749.1,361.0 709.3,322.8" fill="#df3f0b"/>
<polygon points="753.0,356.8 807.2,405.1 802.8,409.9 749.0,361.2" fill="#c83306"/>
<polygon points="753.0,356.8 807.2,405.1 806.6,405.8 752.4,357.4" fill="#df3f0b"/>
<polygon points="749.6,360.6 803.4,409.2 802.8,409.9 749.0,361.2" fill="#df3f0b"/>
<polygon points="807.4,405.0 881.6,474.8 876.4,480.2 802.6,410.0" fill="#c83306"/>
<polygon points="807.4,405.0 881.6,474.8 880.9,475.5 806.7,405.7" fill="#df3f0b"/>
<polygon points="803.3,409.3 877.1,479.5 876.4,480.2 802.6,410.0" fill="#df3f0b"/>
<polygon points="881.8,474.3 995.5,575.3 989.5,582.1 876.2,480.7" fill="#c83306"/>
<polygon points="881.8,474.3 995.5,575.3 994.7,576.3 881.0,475.2" fill="#df3f0b"/>
<polygon points="877.0,479.8 990.3,581.1 989.5,582.1 876.2,480.7" fill="#df3f0b"/>
<polygon points="996.2,574.6 1181.9,742.7 1174.1,751.3 988.8,582.8" fill="#c83306"/>
<polygon points="996.2,574.6 1181.9,742.7 1180.8,743.9 995.2,575.8" fill="#df3f0b"/>
<polygon points="989.8,581.6 1175.2,750.1 1174.1,751.3 988.8,582.8" fill="#df3f0b"/>
<line x1="880" y1="476" x2="992" y2="577" stroke="#fbc89a" stroke-width="1.400"/>
<line x1="992.5" y1="578.7" x2="1399.0" y2="571.0" stroke="#1b7090" stroke-width="1.3"/>
<line x1="1279.0" y1="415.0" x2="1396.0" y2="560.0" stroke="#1b7090" stroke-width="1.3"/>
<line x1="1000.0" y1="598.0" x2="1166.0" y2="932.0" stroke="#1b7090" stroke-width="1.3"/>
<line x1="1032.0" y1="781.0" x2="1166.0" y2="751.0" stroke="#1b7090" stroke-width="1.3"/>
<line x1="1195.0" y1="462.0" x2="1180.0" y2="690.0" stroke="#1b7090" stroke-width="1.3"/>
<line x1="992.5" y1="578.7" x2="996.0" y2="590.0" stroke="#1b7090" stroke-width="1.3"/>
<polygon points="1174.9,743.1 1395.9,567.1 1402.1,574.9 1181.1,750.9" fill="#c83306"/>
<polygon points="1174.9,743.1 1395.9,567.1 1396.8,568.2 1175.8,744.2" fill="#df3f0b"/>
<polygon points="1180.2,749.8 1401.2,573.8 1402.1,574.9 1181.1,750.9" fill="#df3f0b"/>
<polygon points="1174.9,743.1 1395.9,567.1 1397.8,569.4 1176.8,745.4" fill="#ee4108"/>
<polygon points="1181.1,750.9 1402.1,574.9 1401.4,574.0 1180.4,750.0" fill="#b02c05"/>
<line x1="1183" y1="741" x2="1397" y2="572" stroke="#fbd9bc" stroke-width="1.600"/>
<polygon points="1389,582 1411,575 1351,813 1335,806" fill="#c83306"/>
<polygon points="1389,582 1394,581 1339,808 1335,806" fill="#df3f0b"/>
<polygon points="1399,579 1403,578 1345,811 1342,810" fill="#e2420e"/>
<polygon points="1407,576 1411,575 1351,813 1348,812" fill="#df3f0b"/>
<polygon points="1164.500,692 1170,697 1176,693 1176,686 1181,684 1187,700 1186,948 1172.500,962 1165,953" fill="#c83306"/>
<polygon points="1164.500,692 1170,697 1176,750 1175,957 1172.500,962 1165,953" fill="#b42d06"/>
<line x1="1179" y1="700" x2="1178" y2="950" stroke="#e2420e" stroke-width="1.500"/>
<line x1="1184" y1="760" x2="1183" y2="948" stroke="#df3f0b" stroke-width="2"/>
<g stroke="#2b7fe0" stroke-width="1.100" fill="none"><path d="M729.2 429.9 l13.6 -2.1"/>
<path d="M730.0 432.8 l2.5 -3.4"/>
<path d="M733.9 432.3 l2.5 -3.4"/>
<path d="M737.7 431.8 l2.5 -3.4"/>
<path d="M741.5 431.2 l2.5 -3.4"/>
</g>
<g stroke="#2b7fe0" stroke-width="1.100" fill="none"><path d="M761.8 467.9 l14.4 -2.2"/>
<path d="M762.7 471.1 l2.7 -3.6"/>
<path d="M766.8 470.5 l2.7 -3.6"/>
<path d="M770.8 469.9 l2.7 -3.6"/>
<path d="M774.9 469.4 l2.7 -3.6"/>
</g>
<g stroke="#2b7fe0" stroke-width="1.100" fill="none"><path d="M801.0 519.0 l16.0 -2.5"/>
<path d="M802.0 522.5 l3.0 -4.0"/>
<path d="M806.5 521.9 l3.0 -4.0"/>
<path d="M811.0 521.2 l3.0 -4.0"/>
<path d="M815.5 520.6 l3.0 -4.0"/>
</g>
<g stroke="#2b7fe0" stroke-width="1.100" fill="none"><path d="M853.2 581.1 l17.6 -2.8"/>
<path d="M854.3 585.0 l3.3 -4.4"/>
<path d="M859.2 584.3 l3.3 -4.4"/>
<path d="M864.2 583.6 l3.3 -4.4"/>
<path d="M869.1 582.9 l3.3 -4.4"/>
</g>
<g stroke="#2b7fe0" stroke-width="1.100" fill="none"><path d="M922.0 667.2 l20.0 -3.1"/>
<path d="M923.2 671.6 l3.8 -5.0"/>
<path d="M928.9 670.8 l3.8 -5.0"/>
<path d="M934.5 670.1 l3.8 -5.0"/>
<path d="M940.1 669.3 l3.8 -5.0"/>
</g>
<g stroke="#2b7fe0" stroke-width="1.100" fill="none"><path d="M1016.2 783.6 l25.6 -4.0"/>
<path d="M1017.8 789.2 l4.8 -6.4"/>
<path d="M1025.0 788.2 l4.8 -6.4"/>
<path d="M1032.2 787.2 l4.8 -6.4"/>
<path d="M1039.4 786.2 l4.8 -6.4"/>
</g>
<g stroke="#2b7fe0" stroke-width="1.100" fill="none"><path d="M1157.8 958.9 l30.4 -4.8"/>
<path d="M1159.7 965.5 l5.7 -7.6"/>
<path d="M1168.2 964.4 l5.7 -7.6"/>
<path d="M1176.8 963.2 l5.7 -7.6"/>
<path d="M1185.4 962.0 l5.7 -7.6"/>
</g>
<g stroke="#2b7fe0" stroke-width="1.100" fill="none"><path d="M1016.4 356.7 l11.2 -1.8"/>
<path d="M1017.1 359.1 l2.1 -2.8"/>
<path d="M1020.2 358.7 l2.1 -2.8"/>
<path d="M1023.4 358.3 l2.1 -2.8"/>
<path d="M1026.5 357.8 l2.1 -2.8"/>
</g>
<g stroke="#2b7fe0" stroke-width="1.100" fill="none"><path d="M1066.5 383.2 l12.0 -1.9"/>
<path d="M1067.2 385.9 l2.2 -3.0"/>
<path d="M1070.6 385.4 l2.2 -3.0"/>
<path d="M1074.0 384.9 l2.2 -3.0"/>
<path d="M1077.4 384.5 l2.2 -3.0"/>
</g>
<g stroke="#2b7fe0" stroke-width="1.100" fill="none"><path d="M1127.6 414.8 l12.8 -2.0"/>
<path d="M1128.4 417.6 l2.4 -3.2"/>
<path d="M1132.0 417.1 l2.4 -3.2"/>
<path d="M1135.6 416.6 l2.4 -3.2"/>
<path d="M1139.2 416.1 l2.4 -3.2"/>
</g>
<g stroke="#2b7fe0" stroke-width="1.100" fill="none"><path d="M1200.3 450.9 l14.4 -2.2"/>
<path d="M1201.2 454.1 l2.7 -3.6"/>
<path d="M1205.2 453.5 l2.7 -3.6"/>
<path d="M1209.3 452.9 l2.7 -3.6"/>
<path d="M1213.4 452.4 l2.7 -3.6"/>
</g>
<g stroke="#2b7fe0" stroke-width="1.100" fill="none"><path d="M1288.0 494.0 l16.0 2.2"/>
<path d="M1289.0 498.1 l3.0 -4.0"/>
<path d="M1293.5 498.6 l3.0 -4.0"/>
<path d="M1298.0 499.1 l3.0 -4.0"/>
<path d="M1302.5 499.7 l3.0 -4.0"/>
</g>
<g stroke="#2b7fe0" stroke-width="1.100" fill="none"><path d="M1084.2 340.6 l9.6 -1.5"/>
<path d="M1084.8 342.7 l1.8 -2.4"/>
<path d="M1087.5 342.3 l1.8 -2.4"/>
<path d="M1090.2 341.9 l1.8 -2.4"/>
<path d="M1092.9 341.6 l1.8 -2.4"/>
</g>
<g stroke="#2b7fe0" stroke-width="1.100" fill="none"><path d="M1362.8 459.9 l14.4 2.0"/>
<path d="M1363.7 463.5 l2.7 -3.6"/>
<path d="M1367.8 464.0 l2.7 -3.6"/>
<path d="M1371.8 464.5 l2.7 -3.6"/>
<path d="M1375.9 465.0 l2.7 -3.6"/>
</g>
<g stroke="#2b7fe0" stroke-width="1.100" fill="none"><path d="M1548.4 625.5 l19.2 0.0"/>
<path d="M1549.6 630.4 l3.6 -4.8"/>
<path d="M1555.0 630.4 l3.6 -4.8"/>
<path d="M1560.4 630.4 l3.6 -4.8"/>
<path d="M1565.8 630.4 l3.6 -4.8"/>
</g>
<g stroke="#2b7fe0" stroke-width="1.100" fill="none"><path d="M1615.4 567.5 l19.2 0.0"/>
<path d="M1616.6 572.4 l3.6 -4.8"/>
<path d="M1622.0 572.4 l3.6 -4.8"/>
<path d="M1627.4 572.4 l3.6 -4.8"/>
<path d="M1632.8 572.4 l3.6 -4.8"/>
</g>
<g stroke="#2b7fe0" stroke-width="1.100" fill="none"><path d="M1454.0 705.5 l24.0 3.3"/>
<path d="M1455.5 711.6 l4.5 -6.0"/>
<path d="M1462.2 712.4 l4.5 -6.0"/>
<path d="M1469.0 713.2 l4.5 -6.0"/>
<path d="M1475.8 714.0 l4.5 -6.0"/>
</g>
<g stroke="#2b7fe0" stroke-width="1.100" fill="none"><path d="M1328.4 809.7 l27.2 3.7"/>
<path d="M1330.1 816.6 l5.1 -6.8"/>
<path d="M1337.8 817.5 l5.1 -6.8"/>
<path d="M1345.4 818.5 l5.1 -6.8"/>
<path d="M1353.0 819.4 l5.1 -6.8"/>
</g>
<g stroke="#2b7fe0" stroke-width="1.100" fill="none"><path d="M851.6 445.8 l12.8 -2.0"/>
<path d="M852.4 448.6 l2.4 -3.2"/>
<path d="M856.0 448.1 l2.4 -3.2"/>
<path d="M859.6 447.6 l2.4 -3.2"/>
<path d="M863.2 447.1 l2.4 -3.2"/>
</g>
<g stroke="#2b7fe0" stroke-width="1.100" fill="none"><path d="M901.2 490.9 l13.6 -2.1"/>
<path d="M902.0 493.8 l2.5 -3.4"/>
<path d="M905.9 493.3 l2.5 -3.4"/>
<path d="M909.7 492.8 l2.5 -3.4"/>
<path d="M913.5 492.2 l2.5 -3.4"/>
</g>
<g stroke="#2b7fe0" stroke-width="1.100" fill="none"><path d="M960.0 546.0 l16.0 -2.5"/>
<path d="M961.0 549.5 l3.0 -4.0"/>
<path d="M965.5 548.9 l3.0 -4.0"/>
<path d="M970.0 548.2 l3.0 -4.0"/>
<path d="M974.5 547.6 l3.0 -4.0"/>
</g>
<g stroke="#2b7fe0" stroke-width="1.100" fill="none"><path d="M1040.2 613.1 l17.6 -2.8"/>
<path d="M1041.3 617.0 l3.3 -4.4"/>
<path d="M1046.2 616.3 l3.3 -4.4"/>
<path d="M1051.2 615.6 l3.3 -4.4"/>
<path d="M1056.1 614.9 l3.3 -4.4"/>
</g>
<g stroke="#2b7fe0" stroke-width="1.100" fill="none"><path d="M1143.8 711.4 l22.4 -3.5"/>
<path d="M1145.2 716.3 l4.2 -5.6"/>
<path d="M1151.5 715.4 l4.2 -5.6"/>
<path d="M1157.8 714.5 l4.2 -5.6"/>
<path d="M1164.1 713.7 l4.2 -5.6"/>
</g>
<rect x="678.9" y="292.2" width="2.2" height="1.6" fill="#2438b8"/>
<rect x="709.9" y="320.2" width="2.2" height="1.6" fill="#2438b8"/>
<rect x="749.9" y="358.2" width="2.2" height="1.6" fill="#2438b8"/>
<rect x="803.9" y="406.7" width="2.2" height="1.6" fill="#2438b8"/>
<rect x="877.9" y="476.7" width="2.2" height="1.6" fill="#2438b8"/>
<rect x="991.4" y="577.9" width="2.2" height="1.6" fill="#2438b8"/>
<rect x="1176.9" y="746.2" width="2.2" height="1.6" fill="#2438b8"/>
<rect x="854.9" y="238.7" width="2.2" height="1.6" fill="#2438b8"/>
<rect x="902.9" y="258.2" width="2.2" height="1.6" fill="#2438b8"/>
<rect x="961.4" y="281.7" width="2.2" height="1.6" fill="#2438b8"/>
<rect x="1037.9" y="313.2" width="2.2" height="1.6" fill="#2438b8"/>
<rect x="1137.9" y="355.2" width="2.2" height="1.6" fill="#2438b8"/>
<rect x="1277.9" y="414.2" width="2.2" height="1.6" fill="#2438b8"/>
<rect x="1006.4" y="243.2" width="2.2" height="1.6" fill="#2438b8"/>
<rect x="1062.9" y="259.2" width="2.2" height="1.6" fill="#2438b8"/>
<rect x="1128.9" y="280.2" width="2.2" height="1.6" fill="#2438b8"/>
<rect x="1211.4" y="306.7" width="2.2" height="1.6" fill="#2438b8"/>
<rect x="1316.4" y="339.2" width="2.2" height="1.6" fill="#2438b8"/>
<rect x="1452.9" y="381.7" width="2.2" height="1.6" fill="#2438b8"/>
<rect x="1638.9" y="440.2" width="2.2" height="1.6" fill="#2438b8"/>
<rect x="665.9" y="262.2" width="2.2" height="1.6" fill="#2438b8"/>
<rect x="696.9" y="288.2" width="2.2" height="1.6" fill="#2438b8"/>
<rect x="736.4" y="321.7" width="2.2" height="1.6" fill="#2438b8"/>
<rect x="789.9" y="366.2" width="2.2" height="1.6" fill="#2438b8"/>
<rect x="864.9" y="430.2" width="2.2" height="1.6" fill="#2438b8"/>
<rect x="978.9" y="526.2" width="2.2" height="1.6" fill="#2438b8"/>
<rect x="1175.9" y="689.2" width="2.2" height="1.6" fill="#2438b8"/>
<text x="1000" y="578" font-family="Liberation Sans" font-weight="bold" font-size="7" fill="#1a9a22">N27</text>
<text x="1415" y="570" font-family="Liberation Sans" font-weight="bold" font-size="8.5" fill="#1a9a22">N38</text>
<text x="1189" y="749" font-family="Liberation Sans" font-weight="bold" font-size="10" fill="#1a9a22">N32</text>
<text x="1184" y="954" font-family="Liberation Sans" font-weight="bold" font-size="7" fill="#1a9a22">N31</text>
<rect x="1173" y="686" width="5" height="5" fill="none" stroke="#2b62d0" stroke-width="1"/>
</g></svg>
<svg style="left:0;top:0" width="1920" height="1040" viewBox="0 0 1920 1040"><path d="M883.5 343.5 H998.5 Q1002.5 343.5 1002.5 347.5 V458.5 Q1002.5 462.5 998.5 462.5 H893.5 L879.5 476 V347.5 Q879.5 343.5 883.5 343.5 Z" fill="#f6f6f6" stroke="#1a1a1a" stroke-width="1" stroke-linejoin="miter"/></svg>
<div class="t" id="tp0_0" style="left:888.00px;letter-spacing:0.593px;top:353px;font-size:13px;line-height:16px"><b>Dx:</b> 0.012 mm</div>
<div class="t" id="tp0_1" style="left:888.00px;letter-spacing:0.708px;top:371px;font-size:13px;line-height:16px"><b>Dy:</b> -0.184 mm</div>
<div class="t" id="tp0_2" style="left:888.00px;letter-spacing:0.678px;top:389px;font-size:13px;line-height:16px"><b>Dz:</b> -0.092 mm</div>
<div class="t" id="tp0_3" style="left:888.00px;letter-spacing:0.412px;top:407px;font-size:13px;line-height:16px"><b>Gx:</b> -0.432 mRad</div>
<div class="t" id="tp0_4" style="left:888.00px;letter-spacing:0.299px;top:425px;font-size:13px;line-height:16px"><b>Gy:</b> 0.792 mRad</div>
<div class="t" id="tp0_5" style="left:888.00px;letter-spacing:0.413px;top:443px;font-size:13px;line-height:16px"><b>Gz:</b> -0.157 mRad</div>
<svg style="left:0;top:0" width="1920" height="1040" viewBox="0 0 1920 1040"><path d="M995.5 446.5 H1110.5 Q1114.5 446.5 1114.5 450.5 V561.5 Q1114.5 565.5 1110.5 565.5 H1005.5 L991.5 578.5 V450.5 Q991.5 446.5 995.5 446.5 Z" fill="#f6f6f6" stroke="#1a1a1a" stroke-width="1" stroke-linejoin="miter"/></svg>
<div class="t" id="tp1_0" style="left:999.50px;letter-spacing:0.745px;top:456px;font-size:13px;line-height:16px"><b>Dx:</b> 0.011 mm</div>
<div class="t" id="tp1_1" style="left:999.50px;letter-spacing:0.691px;top:474px;font-size:13px;line-height:16px"><b>Dy:</b> -0.971 mm</div>
<div class="t" id="tp1_2" style="left:999.50px;letter-spacing:0.711px;top:492px;font-size:13px;line-height:16px"><b>Dz:</b> -0.067 mm</div>
<div class="t" id="tp1_3" style="left:999.50px;letter-spacing:0.440px;top:510px;font-size:13px;line-height:16px"><b>Gx:</b> -0.455 mRad</div>
<div class="t" id="tp1_4" style="left:999.50px;letter-spacing:0.440px;top:528px;font-size:13px;line-height:16px"><b>Gy:</b> -0.802 mRad</div>
<div class="t" id="tp1_5" style="left:999.50px;letter-spacing:0.413px;top:546px;font-size:13px;line-height:16px"><b>Gz:</b> -0.157 mRad</div>
<svg style="left:0;top:0" width="1920" height="1040" viewBox="0 0 1920 1040"><path d="M1407.5 438.5 H1522.5 Q1526.5 438.5 1526.5 442.5 V553.5 Q1526.5 557.5 1522.5 557.5 H1414.5 L1403.5 571 V442.5 Q1403.5 438.5 1407.5 438.5 Z" fill="#f6f6f6" stroke="#1a1a1a" stroke-width="1" stroke-linejoin="miter"/></svg>
<div class="t" id="tp2_0" style="left:1411.70px;letter-spacing:0.700px;top:448px;font-size:13px;line-height:16px"><b>Dx:</b> -0.947 mm</div>
<div class="t" id="tp2_1" style="left:1411.70px;letter-spacing:0.700px;top:466px;font-size:13px;line-height:16px"><b>Dy:</b> -0.020 mm</div>
<div class="t" id="tp2_2" style="left:1411.70px;letter-spacing:0.694px;top:484px;font-size:13px;line-height:16px"><b>Dz:</b> -0.021 mm</div>
<div class="t" id="tp2_3" style="left:1411.70px;letter-spacing:0.361px;top:502px;font-size:13px;line-height:16px"><b>Gx:</b> 0.041 mRad</div>
<div class="t" id="tp2_4" style="left:1411.70px;letter-spacing:0.426px;top:520px;font-size:13px;line-height:16px"><b>Gy:</b> -0.578 mRad</div>
<div class="t" id="tp2_5" style="left:1411.70px;letter-spacing:0.324px;top:538px;font-size:13px;line-height:16px"><b>Gz:</b> 0.124 mRad</div>
<svg style="left:0;top:0" width="1920" height="1040" viewBox="0 0 1920 1040"><path d="M1186.5 612.5 H1301.5 Q1305.5 612.5 1305.5 616.5 V727.5 Q1305.5 731.5 1301.5 731.5 H1193.5 L1182.5 746 V616.5 Q1182.5 612.5 1186.5 612.5 Z" fill="#f6f6f6" stroke="#1a1a1a" stroke-width="1" stroke-linejoin="miter"/></svg>
<div class="t" id="tp3_0" style="left:1190.80px;letter-spacing:0.648px;top:622px;font-size:13px;line-height:16px"><b>Dx:</b> 0.014 mm</div>
<div class="t" id="tp3_1" style="left:1190.80px;letter-spacing:0.708px;top:640px;font-size:13px;line-height:16px"><b>Dy:</b> -0.016 mm</div>
<div class="t" id="tp3_2" style="left:1190.80px;letter-spacing:0.694px;top:658px;font-size:13px;line-height:16px"><b>Dz:</b> -0.016 mm</div>
<div class="t" id="tp3_3" style="left:1190.80px;letter-spacing:0.419px;top:676px;font-size:13px;line-height:16px"><b>Gx:</b> -0.392 mRad</div>
<div class="t" id="tp3_4" style="left:1190.80px;letter-spacing:0.419px;top:694px;font-size:13px;line-height:16px"><b>Gy:</b> -0.029 mRad</div>
<div class="t" id="tp3_5" style="left:1190.80px;letter-spacing:0.293px;top:712px;font-size:13px;line-height:16px"><b>Gz:</b> 0.199 mRad</div>
<div class="a" style="left:1724px;top:200px;width:200px;height:83px;background:#f6f6f6;border:1px solid #222"></div>
<div class="a" style="left:1725px;top:201px;width:195px;height:24px;background:#e4e4e4"></div>
<div class="a" style="left:1725px;top:253px;width:195px;height:1px;background:#222"></div>
<div class="t b" id="i1" style="left:1728.90px;letter-spacing:0.700px;top:208px;font-size:13px;line-height:16px">Bar N32/N38: L. 4.849 m</div>
<div class="t" id="i2" style="left:1732.90px;letter-spacing:0.159px;top:234px;font-size:13px;line-height:16px">Layer : Steel bars</div>
<div class="t" id="i3" style="left:1732.90px;letter-spacing:0.309px;top:262px;font-size:13px;line-height:16px">IPE200 (S275 (EN 1993-1-1))</div>
<div class="a" style="left:523px;top:703px;width:314px;height:216px;background:#b0281e;border:1px solid #8e1f17"></div>
<div class="a" style="left:528px;top:733px;width:304px;height:181px;background:#f0f0f0"></div>
<svg style="left:529px;top:713px" width="16" height="16"><rect x=".8" y=".8" width="3" height="13.500" fill="#fff" stroke="#222" stroke-width=".8"/><rect x="6" y=".8" width="8.500" height="7" fill="#fff" stroke="#222" stroke-width=".8"/><rect x="6" y="10" width="8.500" height="4.300" fill="#fff" stroke="#222" stroke-width=".8"/></svg>
<div class="t w" id="d1" style="left:551.50px;letter-spacing:-0.094px;top:714px">Properties - Displacements</div>
<svg style="left:750px;top:710px" width="70" height="20" viewBox="750 710 70 20"><rect x="755.500" y="716.500" width="9" height="9" fill="none" stroke="#fff" stroke-width="1.100"/><path d="M803.500 716.500 l9 9 M812.500 716.500 l-9 9" stroke="#fff" stroke-width="1.400"/></svg>
<svg style="left:530px;top:737px" width="16" height="40"><circle cx="7.500" cy="7.500" r="5.800" fill="#fff" stroke="#222" stroke-width="1"/><circle cx="7.500" cy="7.500" r="3.300" fill="#222"/><circle cx="7.500" cy="29.500" r="5.800" fill="#fff" stroke="#222" stroke-width="1"/></svg>
<div class="t b" id="d2" style="left:546.50px;letter-spacing:-0.117px;top:738px">Selected combination</div>
<div class="t" id="d3" style="left:546.50px;letter-spacing:-0.150px;top:760px">Envelope</div>
<div class="a" style="left:528px;top:781px;width:304px;height:1px;background:#fff"></div>
<div class="a" style="left:528px;top:780px;width:304px;height:1px;background:#dcdcdc"></div>
<div class="a" style="left:528px;top:786px;width:304px;height:18px;background:#d9d9d9"></div>
<div class="t" id="d4" style="left:533.50px;letter-spacing:-0.078px;top:788px">Selected comb.</div>
<div class="sel" style="left:531px;top:807px;width:298px;height:25px"></div>
<div class="t" id="d5" style="left:536.80px;letter-spacing:-0.169px;top:813px">Simple loadcase</div>
<div class="sel" style="left:531px;top:841px;width:298px;height:25px"></div>
<div class="t" id="d6" style="left:536.80px;letter-spacing:-0.000px;top:847px">Self weight</div>
<svg style="left:813px;top:815px" width="12" height="50"><path d="M1.500 2 l4 4 l4 -4 M1.500 36 l4 4 l4 -4" fill="none" stroke="#333" stroke-width="1.100"/></svg>
<svg style="left:0;top:0" width="1920" height="1040" viewBox="0 0 1920 1040">
<path d="M438.700 944 V913" stroke="#0000e0" stroke-width="1.600"/><path d="M438.700 909 l3.500 11 h-7z" fill="#00008a"/>
<path d="M438.700 944 L464 932.500" stroke="#00d000" stroke-width="1.600"/><path d="M473 928.500 l-11 1.500 l3 6z" fill="#009000"/>
<path d="M438.700 944 L459 958.500" stroke="#b00000" stroke-width="1.600"/><path d="M467.500 964.500 l-10 -3.500 l4 -5.500z" fill="#7a0000"/>
<text x="434.500" y="906" font-family="Liberation Sans" font-weight="bold" font-size="13" fill="#0000ff">Z</text>
<text x="475.500" y="927" font-family="Liberation Sans" font-weight="bold" font-size="13" fill="#00e000">Y</text>
<text x="468.500" y="973" font-family="Liberation Sans" font-weight="bold" font-size="13" fill="#ff0000">X</text>
</svg>
</body></html>
